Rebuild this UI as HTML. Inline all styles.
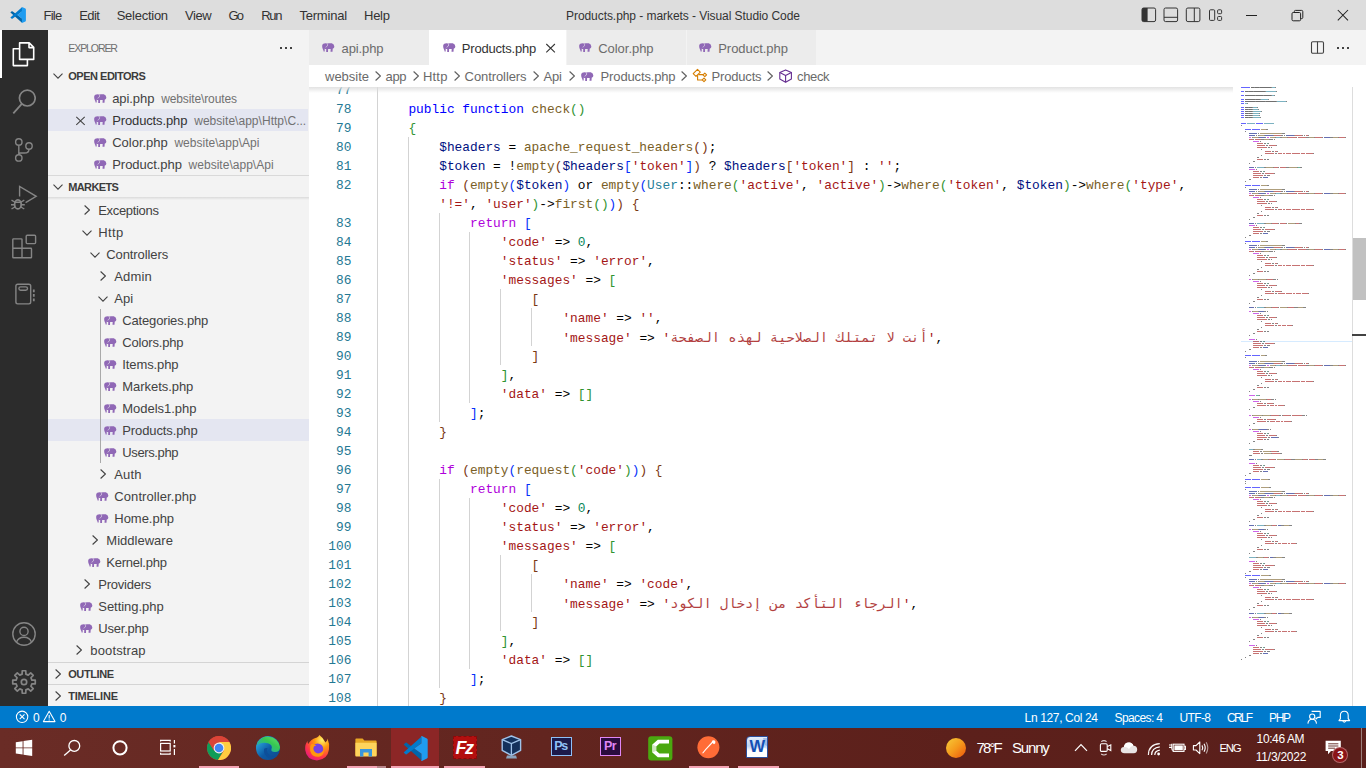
<!DOCTYPE html>
<html lang="en"><head><meta charset="utf-8"><title>Products.php - markets - Visual Studio Code</title>
<style>
html,body{margin:0;padding:0;}
body{width:1366px;height:768px;overflow:hidden;position:relative;background:#fff;font-family:"Liberation Sans",sans-serif;}
.b{position:absolute;display:block;}
.t{position:absolute;white-space:pre;display:block;}
.code{position:absolute;left:0;top:0;font-family:"Liberation Mono","DejaVu Sans Mono",monospace;font-size:12.83px;}
.ln{position:absolute;white-space:pre;height:19px;line-height:19px;color:#000;}
.num{position:absolute;white-space:pre;height:19px;line-height:19px;color:#237893;text-align:right;width:60px;}
.ar{font-family:"DejaVu Sans Mono",monospace;font-size:13.8px;opacity:.82;}
.k{color:#0000ff}.c{color:#af00db}.f{color:#795e26}.v{color:#001080}.s{color:#a31515}.n{color:#098658}.y{color:#267f99}
.b1{color:#0431fa}.b2{color:#319331}.b3{color:#7b3814}
</style></head><body>
<div class="b" style="left:0px;top:0px;width:1366px;height:30px;background:#dddddd;"></div>
<div class="b" style="left:0px;top:30px;width:48px;height:676px;background:#2c2c2c;"></div>
<div class="b" style="left:48px;top:30px;width:261px;height:676px;background:#f3f3f3;"></div>
<div class="b" style="left:309px;top:30px;width:1057px;height:35px;background:#f3f3f3;"></div>
<div class="b" style="left:309px;top:65px;width:1057px;height:22px;background:#ffffff;"></div>
<div class="b" style="left:0px;top:706px;width:1366px;height:22px;background:#007acc;"></div>
<div class="b" style="left:0px;top:728px;width:1366px;height:40px;background:linear-gradient(90deg,#6a2c26 0%,#62251f 40%,#5c201b 70%,#5a1f1b 100%);"></div>
<span class="t " style="left:43.50px;top:1px;height:30px;line-height:30px;font-size:13px;color:#333333;letter-spacing:-0.749px;">File</span>
<span class="t " style="left:79.20px;top:1px;height:30px;line-height:30px;font-size:13px;color:#333333;letter-spacing:-0.534px;">Edit</span>
<span class="t " style="left:116.70px;top:1px;height:30px;line-height:30px;font-size:13px;color:#333333;letter-spacing:-0.260px;">Selection</span>
<span class="t " style="left:184.90px;top:1px;height:30px;line-height:30px;font-size:13px;color:#333333;letter-spacing:-0.381px;">View</span>
<span class="t " style="left:228.50px;top:1px;height:30px;line-height:30px;font-size:13px;color:#333333;letter-spacing:-1.741px;">Go</span>
<span class="t " style="left:261.20px;top:1px;height:30px;line-height:30px;font-size:13px;color:#333333;letter-spacing:-1.223px;">Run</span>
<span class="t " style="left:299.40px;top:1px;height:30px;line-height:30px;font-size:13px;color:#333333;letter-spacing:-0.203px;">Terminal</span>
<span class="t " style="left:364.10px;top:1px;height:30px;line-height:30px;font-size:13px;color:#333333;letter-spacing:-0.312px;">Help</span>
<span class="t " style="left:566.00px;top:1px;height:30px;line-height:30px;font-size:12px;color:#333333;letter-spacing:-0.061px;">Products.php - markets - Visual Studio Code</span>
<div class="b" style="left:309px;top:30px;width:120px;height:35px;background:#ececec;"></div>
<div class="b" style="left:429px;top:30px;width:137px;height:35px;background:#ffffff;"></div>
<div class="b" style="left:567px;top:30px;width:119px;height:35px;background:#ececec;"></div>
<div class="b" style="left:687px;top:30px;width:129px;height:35px;background:#ececec;"></div>
<span class="t " style="left:341.60px;top:31px;height:35px;line-height:35px;font-size:13px;color:#6b6b6b;letter-spacing:-0.108px;">api.php</span>
<span class="t " style="left:461.80px;top:31px;height:35px;line-height:35px;font-size:13px;color:#333333;letter-spacing:-0.200px;">Products.php</span>
<span class="t " style="left:598.20px;top:31px;height:35px;line-height:35px;font-size:13px;color:#6b6b6b;letter-spacing:-0.031px;">Color.php</span>
<span class="t " style="left:718.20px;top:31px;height:35px;line-height:35px;font-size:13px;color:#6b6b6b;letter-spacing:-0.030px;">Product.php</span>
<span class="t " style="left:325.00px;top:66px;height:22px;line-height:22px;font-size:13px;color:#6a6a6a;letter-spacing:-0.013px;">website</span>
<span class="t " style="left:385.60px;top:66px;height:22px;line-height:22px;font-size:13px;color:#6a6a6a;letter-spacing:-0.344px;">app</span>
<span class="t " style="left:423.00px;top:66px;height:22px;line-height:22px;font-size:13px;color:#6a6a6a;letter-spacing:0.186px;">Http</span>
<span class="t " style="left:464.60px;top:66px;height:22px;line-height:22px;font-size:13px;color:#6a6a6a;letter-spacing:-0.085px;">Controllers</span>
<span class="t " style="left:543.60px;top:66px;height:22px;line-height:22px;font-size:13px;color:#6a6a6a;letter-spacing:-0.195px;">Api</span>
<span class="t " style="left:600.60px;top:66px;height:22px;line-height:22px;font-size:13px;color:#6a6a6a;letter-spacing:-0.145px;">Products.php</span>
<span class="t " style="left:711.60px;top:66px;height:22px;line-height:22px;font-size:13px;color:#6a6a6a;letter-spacing:-0.186px;">Products</span>
<span class="t " style="left:797.00px;top:66px;height:22px;line-height:22px;font-size:13px;color:#6a6a6a;letter-spacing:-0.340px;">check</span>
<span class="t " style="left:68.30px;top:31px;height:35px;line-height:35px;font-size:10.6px;color:#6f6f6f;letter-spacing:-1.147px;">EXPLORER</span>
<span class="t " style="left:68.30px;top:65px;height:22px;line-height:22px;font-size:11px;color:#3b3b3b;font-weight:700;letter-spacing:-0.493px;">OPEN EDITORS</span>
<div class="b" style="left:48px;top:109px;width:260px;height:22px;background:#e4e6f1;"></div>
<span class="t " style="left:112.20px;top:88px;height:22px;line-height:22px;font-size:13px;color:#424242;letter-spacing:-0.074px;">api.php</span>
<span class="t " style="left:161.20px;top:88px;height:22px;line-height:22px;font-size:12px;color:#717171;letter-spacing:-0.121px;">website\routes</span>
<span class="t " style="left:112.20px;top:110px;height:22px;line-height:22px;font-size:13px;color:#333;letter-spacing:-0.127px;">Products.php</span>
<span class="t " style="left:194.20px;top:110px;height:22px;line-height:22px;font-size:12px;color:#717171;letter-spacing:0.031px;">website\app\Http\C...</span>
<span class="t " style="left:112.20px;top:132px;height:22px;line-height:22px;font-size:13px;color:#424242;letter-spacing:-0.006px;">Color.php</span>
<span class="t " style="left:174.40px;top:132px;height:22px;line-height:22px;font-size:12px;color:#717171;letter-spacing:0.020px;">website\app\Api</span>
<span class="t " style="left:112.20px;top:154px;height:22px;line-height:22px;font-size:13px;color:#424242;letter-spacing:-0.030px;">Product.php</span>
<span class="t " style="left:188.60px;top:154px;height:22px;line-height:22px;font-size:12px;color:#717171;letter-spacing:0.020px;">website\app\Api</span>
<div class="b" style="left:48px;top:175px;width:261px;height:1px;background:#d9d9d9;"></div>
<span class="t " style="left:68.30px;top:176px;height:22px;line-height:22px;font-size:11px;color:#3b3b3b;font-weight:700;letter-spacing:-0.648px;">MARKETS</span>
<div class="b" style="left:48px;top:419px;width:261px;height:22px;background:#e4e6f1;"></div>
<span class="t " style="left:98.20px;top:200px;height:22px;line-height:22px;font-size:13px;color:#424242;letter-spacing:-0.321px;">Exceptions</span>
<span class="t " style="left:98.20px;top:222px;height:22px;line-height:22px;font-size:13px;color:#424242;letter-spacing:0.386px;">Http</span>
<span class="t " style="left:106.20px;top:244px;height:22px;line-height:22px;font-size:13px;color:#424242;letter-spacing:-0.085px;">Controllers</span>
<span class="t " style="left:114.20px;top:266px;height:22px;line-height:22px;font-size:13px;color:#424242;letter-spacing:0.163px;">Admin</span>
<span class="t " style="left:114.20px;top:288px;height:22px;line-height:22px;font-size:13px;color:#424242;letter-spacing:0.105px;">Api</span>
<span class="t " style="left:122.30px;top:310px;height:22px;line-height:22px;font-size:13px;color:#424242;letter-spacing:-0.166px;">Categories.php</span>
<span class="t " style="left:122.30px;top:332px;height:22px;line-height:22px;font-size:13px;color:#424242;letter-spacing:-0.174px;">Colors.php</span>
<span class="t " style="left:122.30px;top:354px;height:22px;line-height:22px;font-size:13px;color:#424242;letter-spacing:-0.110px;">Items.php</span>
<span class="t " style="left:122.30px;top:376px;height:22px;line-height:22px;font-size:13px;color:#424242;letter-spacing:-0.053px;">Markets.php</span>
<span class="t " style="left:122.30px;top:398px;height:22px;line-height:22px;font-size:13px;color:#424242;letter-spacing:-0.023px;">Models1.php</span>
<span class="t " style="left:122.30px;top:420px;height:22px;line-height:22px;font-size:13px;color:#424242;letter-spacing:-0.109px;">Products.php</span>
<span class="t " style="left:122.30px;top:442px;height:22px;line-height:22px;font-size:13px;color:#424242;letter-spacing:-0.381px;">Users.php</span>
<span class="t " style="left:114.20px;top:464px;height:22px;line-height:22px;font-size:13px;color:#424242;letter-spacing:0.220px;">Auth</span>
<span class="t " style="left:114.30px;top:486px;height:22px;line-height:22px;font-size:13px;color:#424242;letter-spacing:0.082px;">Controller.php</span>
<span class="t " style="left:114.30px;top:508px;height:22px;line-height:22px;font-size:13px;color:#424242;letter-spacing:-0.025px;">Home.php</span>
<span class="t " style="left:106.30px;top:530px;height:22px;line-height:22px;font-size:13px;color:#424242;letter-spacing:0.015px;">Middleware</span>
<span class="t " style="left:106.30px;top:552px;height:22px;line-height:22px;font-size:13px;color:#424242;letter-spacing:-0.253px;">Kernel.php</span>
<span class="t " style="left:98.30px;top:574px;height:22px;line-height:22px;font-size:13px;color:#424242;letter-spacing:-0.238px;">Providers</span>
<span class="t " style="left:98.30px;top:596px;height:22px;line-height:22px;font-size:13px;color:#424242;letter-spacing:-0.037px;">Setting.php</span>
<span class="t " style="left:98.30px;top:618px;height:22px;line-height:22px;font-size:13px;color:#424242;letter-spacing:-0.218px;">User.php</span>
<span class="t " style="left:90.30px;top:640px;height:22px;line-height:22px;font-size:13px;color:#424242;letter-spacing:0.138px;">bootstrap</span>
<div class="b" style="left:100px;top:309px;width:1px;height:154px;background:#a9a9a9;"></div>
<div class="b" style="left:48px;top:662px;width:261px;height:1px;background:#d4d4d4;"></div>
<span class="t " style="left:68.20px;top:663px;height:22px;line-height:22px;font-size:11px;color:#3b3b3b;font-weight:700;letter-spacing:-0.379px;">OUTLINE</span>
<div class="b" style="left:48px;top:684px;width:261px;height:1px;background:#d4d4d4;"></div>
<span class="t " style="left:68.20px;top:685px;height:22px;line-height:22px;font-size:11px;color:#3b3b3b;font-weight:700;letter-spacing:-0.219px;">TIMELINE</span>
<span class="t " style="left:33.00px;top:707px;height:22px;line-height:22px;font-size:12px;color:#ffffff;">0</span>
<span class="t " style="left:59.70px;top:707px;height:22px;line-height:22px;font-size:12px;color:#ffffff;">0</span>
<span class="t " style="left:1024.60px;top:707px;height:22px;line-height:22px;font-size:12px;color:#ffffff;letter-spacing:-0.358px;">Ln 127, Col 24</span>
<span class="t " style="left:1114.60px;top:707px;height:22px;line-height:22px;font-size:12px;color:#ffffff;letter-spacing:-0.621px;">Spaces: 4</span>
<span class="t " style="left:1179.60px;top:707px;height:22px;line-height:22px;font-size:12px;color:#ffffff;letter-spacing:-0.648px;">UTF-8</span>
<span class="t " style="left:1227.00px;top:707px;height:22px;line-height:22px;font-size:12px;color:#ffffff;letter-spacing:-1.778px;">CRLF</span>
<span class="t " style="left:1269.00px;top:707px;height:22px;line-height:22px;font-size:12px;color:#ffffff;letter-spacing:-1.338px;">PHP</span>
<span class="t " style="left:976.60px;top:728px;height:40px;line-height:40px;font-size:15px;color:#ffffff;letter-spacing:-1.947px;">78°F</span>
<span class="t " style="left:1012.00px;top:728px;height:40px;line-height:40px;font-size:15px;color:#ffffff;letter-spacing:-1.182px;">Sunny</span>
<span class="t " style="left:1219.60px;top:728px;height:40px;line-height:40px;font-size:11.4px;color:#ffffff;letter-spacing:-1.352px;">ENG</span>
<span class="t " style="left:1256.60px;top:730px;height:18px;line-height:18px;font-size:12px;color:#ffffff;letter-spacing:-0.385px;">10:46 AM</span>
<span class="t " style="left:1255.80px;top:748px;height:18px;line-height:18px;font-size:12px;color:#ffffff;letter-spacing:-0.236px;">11/3/2022</span>
<div class="code">
<div class="num" style="left:291.4px;top:81px">77</div>
<div class="ln" style="left:377.60px;top:81px"></div>
<div class="num" style="left:291.4px;top:100px">78</div>
<div class="ln" style="left:408.40px;top:100px"><span class="k">public</span> <span class="k">function</span> <span class="f">check</span><span class="b2">()</span></div>
<div class="num" style="left:291.4px;top:119px">79</div>
<div class="ln" style="left:408.40px;top:119px"><span class="b2">{</span></div>
<div class="num" style="left:291.4px;top:138px">80</div>
<div class="ln" style="left:439.20px;top:138px"><span class="v">$headers</span> = <span class="f">apache_request_headers</span><span class="b3">()</span>;</div>
<div class="num" style="left:291.4px;top:157px">81</div>
<div class="ln" style="left:439.20px;top:157px"><span class="v">$token</span> = !<span class="f">empty</span><span class="b3">(</span><span class="v">$headers</span><span class="b1">[</span><span class="s">'token'</span><span class="b1">]</span><span class="b3">)</span> ? <span class="v">$headers</span><span class="b3">[</span><span class="s">'token'</span><span class="b3">]</span> : <span class="s">''</span>;</div>
<div class="num" style="left:291.4px;top:176px">82</div>
<div class="ln" style="left:439.20px;top:176px"><span class="c">if</span> <span class="b3">(</span><span class="f">empty</span><span class="b1">(</span><span class="v">$token</span><span class="b1">)</span> or <span class="f">empty</span><span class="b1">(</span><span class="y">User</span>::<span class="f">where</span><span class="b2">(</span><span class="s">'active'</span>, <span class="s">'active'</span><span class="b2">)</span>-&gt;<span class="f">where</span><span class="b2">(</span><span class="s">'token'</span>, <span class="v">$token</span><span class="b2">)</span>-&gt;<span class="f">where</span><span class="b2">(</span><span class="s">'type'</span>,</div>
<div class="ln" style="left:439.20px;top:195px"><span class="s">'!='</span>, <span class="s">'user'</span><span class="b2">)</span>-&gt;<span class="f">first</span><span class="b2">()</span><span class="b1">)</span><span class="b3">)</span> <span class="b3">{</span></div>
<div class="num" style="left:291.4px;top:214px">83</div>
<div class="ln" style="left:470.00px;top:214px"><span class="c">return</span> <span class="b1">[</span></div>
<div class="num" style="left:291.4px;top:233px">84</div>
<div class="ln" style="left:500.80px;top:233px"><span class="s">'code'</span> =&gt; <span class="n">0</span>,</div>
<div class="num" style="left:291.4px;top:252px">85</div>
<div class="ln" style="left:500.80px;top:252px"><span class="s">'status'</span> =&gt; <span class="s">'error'</span>,</div>
<div class="num" style="left:291.4px;top:271px">86</div>
<div class="ln" style="left:500.80px;top:271px"><span class="s">'messages'</span> =&gt; <span class="b2">[</span></div>
<div class="num" style="left:291.4px;top:290px">87</div>
<div class="ln" style="left:531.60px;top:290px"><span class="b3">[</span></div>
<div class="num" style="left:291.4px;top:309px">88</div>
<div class="ln" style="left:562.40px;top:309px"><span class="s">'name'</span> =&gt; <span class="s">''</span>,</div>
<div class="num" style="left:291.4px;top:328px">89</div>
<div class="ln" style="left:562.40px;top:328px"><span class="s">'message'</span> =&gt; <span class="s">'<span class="ar">أنت لا تمتلك الصلاحية لهذه الصفحة</span>'</span>,</div>
<div class="num" style="left:291.4px;top:347px">90</div>
<div class="ln" style="left:531.60px;top:347px"><span class="b3">]</span></div>
<div class="num" style="left:291.4px;top:366px">91</div>
<div class="ln" style="left:500.80px;top:366px"><span class="b2">]</span>,</div>
<div class="num" style="left:291.4px;top:385px">92</div>
<div class="ln" style="left:500.80px;top:385px"><span class="s">'data'</span> =&gt; <span class="b2">[]</span></div>
<div class="num" style="left:291.4px;top:404px">93</div>
<div class="ln" style="left:470.00px;top:404px"><span class="b1">]</span>;</div>
<div class="num" style="left:291.4px;top:423px">94</div>
<div class="ln" style="left:439.20px;top:423px"><span class="b3">}</span></div>
<div class="num" style="left:291.4px;top:442px">95</div>
<div class="ln" style="left:377.60px;top:442px"></div>
<div class="num" style="left:291.4px;top:461px">96</div>
<div class="ln" style="left:439.20px;top:461px"><span class="c">if</span> <span class="b3">(</span><span class="f">empty</span><span class="b1">(</span><span class="f">request</span><span class="b2">(</span><span class="s">'code'</span><span class="b2">)</span><span class="b1">)</span><span class="b3">)</span> <span class="b3">{</span></div>
<div class="num" style="left:291.4px;top:480px">97</div>
<div class="ln" style="left:470.00px;top:480px"><span class="c">return</span> <span class="b1">[</span></div>
<div class="num" style="left:291.4px;top:499px">98</div>
<div class="ln" style="left:500.80px;top:499px"><span class="s">'code'</span> =&gt; <span class="n">0</span>,</div>
<div class="num" style="left:291.4px;top:518px">99</div>
<div class="ln" style="left:500.80px;top:518px"><span class="s">'status'</span> =&gt; <span class="s">'error'</span>,</div>
<div class="num" style="left:291.4px;top:537px">100</div>
<div class="ln" style="left:500.80px;top:537px"><span class="s">'messages'</span> =&gt; <span class="b2">[</span></div>
<div class="num" style="left:291.4px;top:556px">101</div>
<div class="ln" style="left:531.60px;top:556px"><span class="b3">[</span></div>
<div class="num" style="left:291.4px;top:575px">102</div>
<div class="ln" style="left:562.40px;top:575px"><span class="s">'name'</span> =&gt; <span class="s">'code'</span>,</div>
<div class="num" style="left:291.4px;top:594px">103</div>
<div class="ln" style="left:562.40px;top:594px"><span class="s">'message'</span> =&gt; <span class="s">'<span class="ar">الرجاء التأكد من إدخال الكود</span>'</span>,</div>
<div class="num" style="left:291.4px;top:613px">104</div>
<div class="ln" style="left:531.60px;top:613px"><span class="b3">]</span></div>
<div class="num" style="left:291.4px;top:632px">105</div>
<div class="ln" style="left:500.80px;top:632px"><span class="b2">]</span>,</div>
<div class="num" style="left:291.4px;top:651px">106</div>
<div class="ln" style="left:500.80px;top:651px"><span class="s">'data'</span> =&gt; <span class="b2">[]</span></div>
<div class="num" style="left:291.4px;top:670px">107</div>
<div class="ln" style="left:470.00px;top:670px"><span class="b1">]</span>;</div>
<div class="num" style="left:291.4px;top:689px">108</div>
<div class="ln" style="left:439.20px;top:689px"><span class="b3">}</span></div>
</div>
<div class="b" style="left:377px;top:80px;width:1px;height:646px;background:#d3d3d3;"></div>
<div class="b" style="left:408px;top:137px;width:1px;height:589px;background:#d3d3d3;"></div>
<div class="b" style="left:439px;top:213px;width:1px;height:209px;background:#d3d3d3;"></div>
<div class="b" style="left:469px;top:232px;width:1px;height:171px;background:#d3d3d3;"></div>
<div class="b" style="left:500px;top:289px;width:1px;height:76px;background:#d3d3d3;"></div>
<div class="b" style="left:531px;top:308px;width:1px;height:38px;background:#d3d3d3;"></div>
<div class="b" style="left:439px;top:479px;width:1px;height:209px;background:#d3d3d3;"></div>
<div class="b" style="left:469px;top:498px;width:1px;height:171px;background:#d3d3d3;"></div>
<div class="b" style="left:500px;top:555px;width:1px;height:76px;background:#d3d3d3;"></div>
<div class="b" style="left:531px;top:574px;width:1px;height:38px;background:#d3d3d3;"></div>
<div class="b" style="left:309px;top:65px;width:1057px;height:22px;background:#ffffff;"></div>
<div class="b" style="left:309px;top:87px;width:924px;height:6px;background:linear-gradient(#dddddd,rgba(255,255,255,0));opacity:.85"></div>
<span class="t " style="left:325.00px;top:66px;height:22px;line-height:22px;font-size:13px;color:#6a6a6a;letter-spacing:-0.013px;">website</span>
<span class="t " style="left:385.60px;top:66px;height:22px;line-height:22px;font-size:13px;color:#6a6a6a;letter-spacing:-0.344px;">app</span>
<span class="t " style="left:423.00px;top:66px;height:22px;line-height:22px;font-size:13px;color:#6a6a6a;letter-spacing:0.186px;">Http</span>
<span class="t " style="left:464.60px;top:66px;height:22px;line-height:22px;font-size:13px;color:#6a6a6a;letter-spacing:-0.085px;">Controllers</span>
<span class="t " style="left:543.60px;top:66px;height:22px;line-height:22px;font-size:13px;color:#6a6a6a;letter-spacing:-0.195px;">Api</span>
<span class="t " style="left:600.60px;top:66px;height:22px;line-height:22px;font-size:13px;color:#6a6a6a;letter-spacing:-0.145px;">Products.php</span>
<span class="t " style="left:711.60px;top:66px;height:22px;line-height:22px;font-size:13px;color:#6a6a6a;letter-spacing:-0.186px;">Products</span>
<span class="t " style="left:797.00px;top:66px;height:22px;line-height:22px;font-size:13px;color:#6a6a6a;letter-spacing:-0.340px;">check</span>
<div class="b" style="left:309px;top:706px;width:1057px;height:22px;background:#007acc;"></div>
<span class="t " style="left:1024.60px;top:707px;height:22px;line-height:22px;font-size:12px;color:#ffffff;letter-spacing:-0.358px;">Ln 127, Col 24</span>
<span class="t " style="left:1114.60px;top:707px;height:22px;line-height:22px;font-size:12px;color:#ffffff;letter-spacing:-0.621px;">Spaces: 4</span>
<span class="t " style="left:1179.60px;top:707px;height:22px;line-height:22px;font-size:12px;color:#ffffff;letter-spacing:-0.648px;">UTF-8</span>
<span class="t " style="left:1227.00px;top:707px;height:22px;line-height:22px;font-size:12px;color:#ffffff;letter-spacing:-1.778px;">CRLF</span>
<span class="t " style="left:1269.00px;top:707px;height:22px;line-height:22px;font-size:12px;color:#ffffff;letter-spacing:-1.338px;">PHP</span>
<div class="b" style="left:1352px;top:87px;width:1px;height:619px;background:#dddddd;"></div>
<div class="b" style="left:1353px;top:238px;width:13px;height:62px;background:#c1c1c1;"></div>
<div class="b" style="left:1352px;top:334px;width:14px;height:2px;background:#424242;"></div>
<div class="b" style="left:48px;top:197px;width:261px;height:3px;background:linear-gradient(rgba(0,0,0,0.10),rgba(0,0,0,0));"></div>
<svg class="b" style="left:10.4px;top:7.2px;" width="16" height="16" viewBox="0 0 16 16"><path fill="#0065a9" d="M0.4,5.6 L1.7,4.3 Q2,4.1 2.4,4.3 L12,11.6 L12,15.8 Z"/><path fill="#007acc" d="M0.4,10.4 L1.7,11.7 Q2,11.9 2.4,11.7 L12,4.4 L12,0.2 Z"/><path fill="#1f9cf0" d="M11.6,0.1 Q12,-0.1 12.5,0.2 L15.4,1.6 Q15.9,1.9 15.9,2.5 L15.9,13.5 Q15.9,14.1 15.4,14.4 L12.5,15.8 Q12,16.1 11.6,15.9 L11.9,15.6 L11.9,11.4 L7.3,8 L11.9,4.6 L11.9,0.4 Z"/></svg>
<svg class="b" style="left:1141px;top:7px;" width="16" height="16" viewBox="0 0 16 16"><rect x="1" y="1" width="13.6" height="13.6" rx="1.6" fill="none" stroke="#333333" stroke-width="1"/><path fill="#333333" d="M1,2.4 Q1,1 2.4,1 L6.6,1 L6.6,14.6 L2.4,14.6 Q1,14.6 1,13.2 Z"/></svg>
<svg class="b" style="left:1163px;top:7px;" width="16" height="16" viewBox="0 0 16 16"><rect x="1" y="1" width="13.6" height="13.6" rx="1.6" fill="none" stroke="#333333" stroke-width="1"/><path stroke="#333333" stroke-width="1" d="M1,10.3 H14.6"/></svg>
<svg class="b" style="left:1185px;top:7px;" width="16" height="16" viewBox="0 0 16 16"><rect x="1.3" y="1" width="13.6" height="13.6" rx="1.6" fill="none" stroke="#333333" stroke-width="1"/><path stroke="#333333" stroke-width="1" d="M9.3,1 V14.6"/></svg>
<svg class="b" style="left:1208px;top:7px;" width="16" height="16" viewBox="0 0 16 16"><rect x="1.5" y="2.8" width="5.2" height="10.6" rx="1" fill="none" stroke="#333333" stroke-width="1"/><rect x="9.6" y="2.8" width="4" height="3.9" rx="0.9" fill="none" stroke="#333333" stroke-width="1"/><rect x="9.6" y="9.5" width="4" height="3.9" rx="0.9" fill="none" stroke="#333333" stroke-width="1"/></svg>
<div class="b" style="left:1246px;top:15px;width:11px;height:1px;background:#222;"></div>
<svg class="b" style="left:1290px;top:9px;" width="15" height="14" viewBox="0 0 15 14"><rect x="2" y="3.5" width="8.6" height="8.3" rx="1.2" fill="none" stroke="#222" stroke-width="1"/><path fill="none" stroke="#222" stroke-width="1" d="M4.3,3.4 V2.6 Q4.3,1.4 5.5,1.4 H11.6 Q12.8,1.4 12.8,2.6 V8.4 Q12.8,9.6 11.6,9.6 H10.8"/></svg>
<svg class="b" style="left:1337px;top:9px;" width="12" height="12" viewBox="0 0 12 12"><path stroke="#222" stroke-width="1.05" d="M0.8,1 L11,11.3 M11,1 L0.8,11.3"/></svg>
<div class="b" style="left:0px;top:30px;width:2px;height:48px;background:#ffffff;"></div>
<svg class="b" style="left:12px;top:42px;" width="24" height="26" viewBox="0 0 24 26"><path fill="none" stroke="#fff" stroke-width="1.6" stroke-linejoin="round" d="M7.6,0.9 H17.2 L21.7,5.4 V17.4 H7.6 Z M17,0.9 V5.6 H21.7 M7.6,6.8 H1.3 V23.6 H15.4 V17.6"/></svg>
<svg class="b" style="left:12px;top:88px;" width="24" height="28" viewBox="0 0 24 28"><circle cx="15.3" cy="10.1" r="7.9" fill="none" stroke="#858585" stroke-width="1.7"/><path stroke="#858585" stroke-width="1.8" d="M9.8,15.9 L1.3,25.3"/></svg>
<svg class="b" style="left:12px;top:136px;" width="24" height="28" viewBox="0 0 24 28"><g fill="none" stroke="#858585" stroke-width="1.4"><circle cx="6.8" cy="5.9" r="3.2"/><circle cx="6.8" cy="21.9" r="3.2"/><circle cx="17" cy="10" r="3.2"/><path d="M6.8,9.1 V18.7 M17,13.2 Q17,17 12.5,17 H8.5 Q6.8,17 6.8,18.7"/></g></svg>
<svg class="b" style="left:10px;top:184px;" width="28" height="26" viewBox="0 0 28 26"><g fill="none" stroke="#858585" stroke-width="1.4"><path d="M9.6,12.4 V2.4 L26.2,12.3 L15.6,18.6"/><ellipse cx="7.9" cy="20.4" rx="3.3" ry="4.5" stroke-width="1.8"/><path d="M4.6,18.3 H11.2 M1.5,16.2 L4.7,18 M14.3,16.2 L11.1,18 M1,20.8 H4.5 M11.3,20.8 H14.8 M1.5,25 L4.9,23 M14.3,25 L10.9,23"/></g></svg>
<svg class="b" style="left:10px;top:232px;" width="28" height="28" viewBox="0 0 28 28"><g fill="none" stroke="#858585" stroke-width="1.4"><path d="M3,6.9 H11.4 Q12,6.9 12,7.5 V16.3 H20.9 Q21.5,16.3 21.5,16.9 V25.2 Q21.5,25.8 20.9,25.8 H3.4 Q2.8,25.8 2.8,25.2 V7.5 Q2.8,6.9 3.4,6.9 M2.8,16.3 H12 V25.8"/><rect x="16.2" y="3.2" width="9.4" height="8.4" rx="1"/></g></svg>
<svg class="b" style="left:12px;top:280px;" width="26" height="28" viewBox="0 0 26 28"><g fill="none" stroke="#858585" stroke-width="1.4"><rect x="3.9" y="4.2" width="14.8" height="19.7" rx="1.8"/><rect x="6.9" y="6.9" width="8.6" height="3.4" rx="1.7"/><path stroke-width="1.8" d="M21.8,9.6 V12.2 M21.8,14.1 V16.7 M21.8,18.6 V21.2"/></g></svg>
<svg class="b" style="left:10px;top:620px;" width="28" height="28" viewBox="0 0 28 28"><g fill="none" stroke="#858585" stroke-width="1.4"><circle cx="14" cy="14" r="11.2"/><circle cx="14" cy="11.4" r="4.1"/><path d="M6.5,22.3 Q8,17.2 14,17.2 Q20,17.2 21.5,22.3"/></g></svg>
<svg class="b" style="left:10px;top:668px;" width="28" height="28" viewBox="0 0 28 28"><g fill="none" stroke="#858585" stroke-width="1.7" stroke-linejoin="round"><path d="M12.22,2.74 L15.78,2.74 L15.89,6.12 L18.23,7.09 L20.70,4.78 L23.22,7.30 L20.91,9.77 L21.88,12.11 L25.26,12.22 L25.26,15.78 L21.88,15.89 L20.91,18.23 L23.22,20.70 L20.70,23.22 L18.23,20.91 L15.89,21.88 L15.78,25.26 L12.22,25.26 L12.11,21.88 L9.77,20.91 L7.30,23.22 L4.78,20.70 L7.09,18.23 L6.12,15.89 L2.74,15.78 L2.74,12.22 L6.12,12.11 L7.09,9.77 L4.78,7.30 L7.30,4.78 L9.77,7.09 L12.11,6.12 Z"/><circle cx="14" cy="14" r="2.7"/></g></svg>
<div class="b" style="left:280px;top:47px;width:2px;height:2px;background:#424242;"></div>
<div class="b" style="left:285px;top:47px;width:2px;height:2px;background:#424242;"></div>
<div class="b" style="left:290px;top:47px;width:2px;height:2px;background:#424242;"></div>
<svg class="b" style="left:53px;top:73.2px;" width="10" height="6" viewBox="0 0 10 6"><path fill="none" stroke="#424242" stroke-width="1.1" d="M0.5,0.6 L5,5.2 L9.5,0.6"/></svg>
<svg class="b" style="left:53px;top:184.2px;" width="10" height="6" viewBox="0 0 10 6"><path fill="none" stroke="#424242" stroke-width="1.1" d="M0.5,0.6 L5,5.2 L9.5,0.6"/></svg>
<svg class="b" style="left:55.4px;top:669px;" width="6" height="10" viewBox="0 0 6 10"><path fill="none" stroke="#424242" stroke-width="1.1" d="M0.6,0.5 L5.4,5 L0.6,9.5"/></svg>
<svg class="b" style="left:55.4px;top:691.1px;" width="6" height="10" viewBox="0 0 6 10"><path fill="none" stroke="#424242" stroke-width="1.1" d="M0.6,0.5 L5.4,5 L0.6,9.5"/></svg>
<svg class="b" style="left:93.8px;top:93.7px;" width="13" height="10" viewBox="0 0 13 10"><path fill="#9068b6" d="M1.3,0.7 Q3,-0.2 5,0.5 Q6.2,0 7.6,0.2 L9.8,0.3 Q12.5,1.4 12.3,3.9 Q12.1,5.2 10.7,5.7 L10.5,8.7 L8.5,8.7 L8.7,6.1 L6.1,6.1 L6,9 L4.2,9 L4.2,6.1 Q3.1,5.9 2.7,5.4 L2.7,8.5 L1.6,8.5 Q1.5,7 0.9,6.2 Q0,4.5 0.2,2.6 Q0.3,1.3 1.3,0.7 Z"/><path fill="none" stroke="#f3f3f3" stroke-width="0.55" d="M5.7,0.6 Q6.1,3.6 3.6,4.3"/></svg>
<svg class="b" style="left:93.8px;top:115.7px;" width="13" height="10" viewBox="0 0 13 10"><path fill="#9068b6" d="M1.3,0.7 Q3,-0.2 5,0.5 Q6.2,0 7.6,0.2 L9.8,0.3 Q12.5,1.4 12.3,3.9 Q12.1,5.2 10.7,5.7 L10.5,8.7 L8.5,8.7 L8.7,6.1 L6.1,6.1 L6,9 L4.2,9 L4.2,6.1 Q3.1,5.9 2.7,5.4 L2.7,8.5 L1.6,8.5 Q1.5,7 0.9,6.2 Q0,4.5 0.2,2.6 Q0.3,1.3 1.3,0.7 Z"/><path fill="none" stroke="#e4e6f1" stroke-width="0.55" d="M5.7,0.6 Q6.1,3.6 3.6,4.3"/></svg>
<svg class="b" style="left:93.8px;top:137.7px;" width="13" height="10" viewBox="0 0 13 10"><path fill="#9068b6" d="M1.3,0.7 Q3,-0.2 5,0.5 Q6.2,0 7.6,0.2 L9.8,0.3 Q12.5,1.4 12.3,3.9 Q12.1,5.2 10.7,5.7 L10.5,8.7 L8.5,8.7 L8.7,6.1 L6.1,6.1 L6,9 L4.2,9 L4.2,6.1 Q3.1,5.9 2.7,5.4 L2.7,8.5 L1.6,8.5 Q1.5,7 0.9,6.2 Q0,4.5 0.2,2.6 Q0.3,1.3 1.3,0.7 Z"/><path fill="none" stroke="#f3f3f3" stroke-width="0.55" d="M5.7,0.6 Q6.1,3.6 3.6,4.3"/></svg>
<svg class="b" style="left:93.8px;top:159.7px;" width="13" height="10" viewBox="0 0 13 10"><path fill="#9068b6" d="M1.3,0.7 Q3,-0.2 5,0.5 Q6.2,0 7.6,0.2 L9.8,0.3 Q12.5,1.4 12.3,3.9 Q12.1,5.2 10.7,5.7 L10.5,8.7 L8.5,8.7 L8.7,6.1 L6.1,6.1 L6,9 L4.2,9 L4.2,6.1 Q3.1,5.9 2.7,5.4 L2.7,8.5 L1.6,8.5 Q1.5,7 0.9,6.2 Q0,4.5 0.2,2.6 Q0.3,1.3 1.3,0.7 Z"/><path fill="none" stroke="#f3f3f3" stroke-width="0.55" d="M5.7,0.6 Q6.1,3.6 3.6,4.3"/></svg>
<svg class="b" style="left:74.6px;top:114.6px;" width="12" height="12" viewBox="0 0 12 12"><path stroke="#424242" stroke-width="1.05" d="M1.3,1.8 L9.7,9.8 M9.7,1.8 L1.3,9.8"/></svg>
<svg class="b" style="left:84.1px;top:205.0px;" width="6" height="10" viewBox="0 0 6 10"><path fill="none" stroke="#424242" stroke-width="1.1" d="M0.6,0.5 L5.4,5 L0.6,9.5"/></svg>
<svg class="b" style="left:82.0px;top:229.5px;" width="10" height="6" viewBox="0 0 10 6"><path fill="none" stroke="#424242" stroke-width="1.1" d="M0.5,0.6 L5,5.2 L9.5,0.6"/></svg>
<svg class="b" style="left:90.0px;top:251.5px;" width="10" height="6" viewBox="0 0 10 6"><path fill="none" stroke="#424242" stroke-width="1.1" d="M0.5,0.6 L5,5.2 L9.5,0.6"/></svg>
<svg class="b" style="left:100.1px;top:271.0px;" width="6" height="10" viewBox="0 0 6 10"><path fill="none" stroke="#424242" stroke-width="1.1" d="M0.6,0.5 L5.4,5 L0.6,9.5"/></svg>
<svg class="b" style="left:98.0px;top:295.5px;" width="10" height="6" viewBox="0 0 10 6"><path fill="none" stroke="#424242" stroke-width="1.1" d="M0.5,0.6 L5,5.2 L9.5,0.6"/></svg>
<svg class="b" style="left:103.6px;top:315.7px;" width="13" height="10" viewBox="0 0 13 10"><path fill="#9068b6" d="M1.3,0.7 Q3,-0.2 5,0.5 Q6.2,0 7.6,0.2 L9.8,0.3 Q12.5,1.4 12.3,3.9 Q12.1,5.2 10.7,5.7 L10.5,8.7 L8.5,8.7 L8.7,6.1 L6.1,6.1 L6,9 L4.2,9 L4.2,6.1 Q3.1,5.9 2.7,5.4 L2.7,8.5 L1.6,8.5 Q1.5,7 0.9,6.2 Q0,4.5 0.2,2.6 Q0.3,1.3 1.3,0.7 Z"/><path fill="none" stroke="#f3f3f3" stroke-width="0.55" d="M5.7,0.6 Q6.1,3.6 3.6,4.3"/></svg>
<svg class="b" style="left:103.6px;top:337.7px;" width="13" height="10" viewBox="0 0 13 10"><path fill="#9068b6" d="M1.3,0.7 Q3,-0.2 5,0.5 Q6.2,0 7.6,0.2 L9.8,0.3 Q12.5,1.4 12.3,3.9 Q12.1,5.2 10.7,5.7 L10.5,8.7 L8.5,8.7 L8.7,6.1 L6.1,6.1 L6,9 L4.2,9 L4.2,6.1 Q3.1,5.9 2.7,5.4 L2.7,8.5 L1.6,8.5 Q1.5,7 0.9,6.2 Q0,4.5 0.2,2.6 Q0.3,1.3 1.3,0.7 Z"/><path fill="none" stroke="#f3f3f3" stroke-width="0.55" d="M5.7,0.6 Q6.1,3.6 3.6,4.3"/></svg>
<svg class="b" style="left:103.6px;top:359.7px;" width="13" height="10" viewBox="0 0 13 10"><path fill="#9068b6" d="M1.3,0.7 Q3,-0.2 5,0.5 Q6.2,0 7.6,0.2 L9.8,0.3 Q12.5,1.4 12.3,3.9 Q12.1,5.2 10.7,5.7 L10.5,8.7 L8.5,8.7 L8.7,6.1 L6.1,6.1 L6,9 L4.2,9 L4.2,6.1 Q3.1,5.9 2.7,5.4 L2.7,8.5 L1.6,8.5 Q1.5,7 0.9,6.2 Q0,4.5 0.2,2.6 Q0.3,1.3 1.3,0.7 Z"/><path fill="none" stroke="#f3f3f3" stroke-width="0.55" d="M5.7,0.6 Q6.1,3.6 3.6,4.3"/></svg>
<svg class="b" style="left:103.6px;top:381.7px;" width="13" height="10" viewBox="0 0 13 10"><path fill="#9068b6" d="M1.3,0.7 Q3,-0.2 5,0.5 Q6.2,0 7.6,0.2 L9.8,0.3 Q12.5,1.4 12.3,3.9 Q12.1,5.2 10.7,5.7 L10.5,8.7 L8.5,8.7 L8.7,6.1 L6.1,6.1 L6,9 L4.2,9 L4.2,6.1 Q3.1,5.9 2.7,5.4 L2.7,8.5 L1.6,8.5 Q1.5,7 0.9,6.2 Q0,4.5 0.2,2.6 Q0.3,1.3 1.3,0.7 Z"/><path fill="none" stroke="#f3f3f3" stroke-width="0.55" d="M5.7,0.6 Q6.1,3.6 3.6,4.3"/></svg>
<svg class="b" style="left:103.6px;top:403.7px;" width="13" height="10" viewBox="0 0 13 10"><path fill="#9068b6" d="M1.3,0.7 Q3,-0.2 5,0.5 Q6.2,0 7.6,0.2 L9.8,0.3 Q12.5,1.4 12.3,3.9 Q12.1,5.2 10.7,5.7 L10.5,8.7 L8.5,8.7 L8.7,6.1 L6.1,6.1 L6,9 L4.2,9 L4.2,6.1 Q3.1,5.9 2.7,5.4 L2.7,8.5 L1.6,8.5 Q1.5,7 0.9,6.2 Q0,4.5 0.2,2.6 Q0.3,1.3 1.3,0.7 Z"/><path fill="none" stroke="#f3f3f3" stroke-width="0.55" d="M5.7,0.6 Q6.1,3.6 3.6,4.3"/></svg>
<svg class="b" style="left:103.6px;top:425.7px;" width="13" height="10" viewBox="0 0 13 10"><path fill="#9068b6" d="M1.3,0.7 Q3,-0.2 5,0.5 Q6.2,0 7.6,0.2 L9.8,0.3 Q12.5,1.4 12.3,3.9 Q12.1,5.2 10.7,5.7 L10.5,8.7 L8.5,8.7 L8.7,6.1 L6.1,6.1 L6,9 L4.2,9 L4.2,6.1 Q3.1,5.9 2.7,5.4 L2.7,8.5 L1.6,8.5 Q1.5,7 0.9,6.2 Q0,4.5 0.2,2.6 Q0.3,1.3 1.3,0.7 Z"/><path fill="none" stroke="#e4e6f1" stroke-width="0.55" d="M5.7,0.6 Q6.1,3.6 3.6,4.3"/></svg>
<svg class="b" style="left:103.6px;top:447.7px;" width="13" height="10" viewBox="0 0 13 10"><path fill="#9068b6" d="M1.3,0.7 Q3,-0.2 5,0.5 Q6.2,0 7.6,0.2 L9.8,0.3 Q12.5,1.4 12.3,3.9 Q12.1,5.2 10.7,5.7 L10.5,8.7 L8.5,8.7 L8.7,6.1 L6.1,6.1 L6,9 L4.2,9 L4.2,6.1 Q3.1,5.9 2.7,5.4 L2.7,8.5 L1.6,8.5 Q1.5,7 0.9,6.2 Q0,4.5 0.2,2.6 Q0.3,1.3 1.3,0.7 Z"/><path fill="none" stroke="#f3f3f3" stroke-width="0.55" d="M5.7,0.6 Q6.1,3.6 3.6,4.3"/></svg>
<svg class="b" style="left:100.1px;top:469.0px;" width="6" height="10" viewBox="0 0 6 10"><path fill="none" stroke="#424242" stroke-width="1.1" d="M0.6,0.5 L5.4,5 L0.6,9.5"/></svg>
<svg class="b" style="left:95.6px;top:491.7px;" width="13" height="10" viewBox="0 0 13 10"><path fill="#9068b6" d="M1.3,0.7 Q3,-0.2 5,0.5 Q6.2,0 7.6,0.2 L9.8,0.3 Q12.5,1.4 12.3,3.9 Q12.1,5.2 10.7,5.7 L10.5,8.7 L8.5,8.7 L8.7,6.1 L6.1,6.1 L6,9 L4.2,9 L4.2,6.1 Q3.1,5.9 2.7,5.4 L2.7,8.5 L1.6,8.5 Q1.5,7 0.9,6.2 Q0,4.5 0.2,2.6 Q0.3,1.3 1.3,0.7 Z"/><path fill="none" stroke="#f3f3f3" stroke-width="0.55" d="M5.7,0.6 Q6.1,3.6 3.6,4.3"/></svg>
<svg class="b" style="left:95.6px;top:513.7px;" width="13" height="10" viewBox="0 0 13 10"><path fill="#9068b6" d="M1.3,0.7 Q3,-0.2 5,0.5 Q6.2,0 7.6,0.2 L9.8,0.3 Q12.5,1.4 12.3,3.9 Q12.1,5.2 10.7,5.7 L10.5,8.7 L8.5,8.7 L8.7,6.1 L6.1,6.1 L6,9 L4.2,9 L4.2,6.1 Q3.1,5.9 2.7,5.4 L2.7,8.5 L1.6,8.5 Q1.5,7 0.9,6.2 Q0,4.5 0.2,2.6 Q0.3,1.3 1.3,0.7 Z"/><path fill="none" stroke="#f3f3f3" stroke-width="0.55" d="M5.7,0.6 Q6.1,3.6 3.6,4.3"/></svg>
<svg class="b" style="left:92.2px;top:535.0px;" width="6" height="10" viewBox="0 0 6 10"><path fill="none" stroke="#424242" stroke-width="1.1" d="M0.6,0.5 L5.4,5 L0.6,9.5"/></svg>
<svg class="b" style="left:87.6px;top:557.7px;" width="13" height="10" viewBox="0 0 13 10"><path fill="#9068b6" d="M1.3,0.7 Q3,-0.2 5,0.5 Q6.2,0 7.6,0.2 L9.8,0.3 Q12.5,1.4 12.3,3.9 Q12.1,5.2 10.7,5.7 L10.5,8.7 L8.5,8.7 L8.7,6.1 L6.1,6.1 L6,9 L4.2,9 L4.2,6.1 Q3.1,5.9 2.7,5.4 L2.7,8.5 L1.6,8.5 Q1.5,7 0.9,6.2 Q0,4.5 0.2,2.6 Q0.3,1.3 1.3,0.7 Z"/><path fill="none" stroke="#f3f3f3" stroke-width="0.55" d="M5.7,0.6 Q6.1,3.6 3.6,4.3"/></svg>
<svg class="b" style="left:84.2px;top:579.0px;" width="6" height="10" viewBox="0 0 6 10"><path fill="none" stroke="#424242" stroke-width="1.1" d="M0.6,0.5 L5.4,5 L0.6,9.5"/></svg>
<svg class="b" style="left:79.6px;top:601.7px;" width="13" height="10" viewBox="0 0 13 10"><path fill="#9068b6" d="M1.3,0.7 Q3,-0.2 5,0.5 Q6.2,0 7.6,0.2 L9.8,0.3 Q12.5,1.4 12.3,3.9 Q12.1,5.2 10.7,5.7 L10.5,8.7 L8.5,8.7 L8.7,6.1 L6.1,6.1 L6,9 L4.2,9 L4.2,6.1 Q3.1,5.9 2.7,5.4 L2.7,8.5 L1.6,8.5 Q1.5,7 0.9,6.2 Q0,4.5 0.2,2.6 Q0.3,1.3 1.3,0.7 Z"/><path fill="none" stroke="#f3f3f3" stroke-width="0.55" d="M5.7,0.6 Q6.1,3.6 3.6,4.3"/></svg>
<svg class="b" style="left:79.6px;top:623.7px;" width="13" height="10" viewBox="0 0 13 10"><path fill="#9068b6" d="M1.3,0.7 Q3,-0.2 5,0.5 Q6.2,0 7.6,0.2 L9.8,0.3 Q12.5,1.4 12.3,3.9 Q12.1,5.2 10.7,5.7 L10.5,8.7 L8.5,8.7 L8.7,6.1 L6.1,6.1 L6,9 L4.2,9 L4.2,6.1 Q3.1,5.9 2.7,5.4 L2.7,8.5 L1.6,8.5 Q1.5,7 0.9,6.2 Q0,4.5 0.2,2.6 Q0.3,1.3 1.3,0.7 Z"/><path fill="none" stroke="#f3f3f3" stroke-width="0.55" d="M5.7,0.6 Q6.1,3.6 3.6,4.3"/></svg>
<svg class="b" style="left:76.2px;top:645.0px;" width="6" height="10" viewBox="0 0 6 10"><path fill="none" stroke="#424242" stroke-width="1.1" d="M0.6,0.5 L5.4,5 L0.6,9.5"/></svg>
<svg class="b" style="left:322.4px;top:42.9px;" width="13" height="10" viewBox="0 0 13 10"><path fill="#9068b6" d="M1.3,0.7 Q3,-0.2 5,0.5 Q6.2,0 7.6,0.2 L9.8,0.3 Q12.5,1.4 12.3,3.9 Q12.1,5.2 10.7,5.7 L10.5,8.7 L8.5,8.7 L8.7,6.1 L6.1,6.1 L6,9 L4.2,9 L4.2,6.1 Q3.1,5.9 2.7,5.4 L2.7,8.5 L1.6,8.5 Q1.5,7 0.9,6.2 Q0,4.5 0.2,2.6 Q0.3,1.3 1.3,0.7 Z"/><path fill="none" stroke="#ececec" stroke-width="0.55" d="M5.7,0.6 Q6.1,3.6 3.6,4.3"/></svg>
<svg class="b" style="left:442.8px;top:42.9px;" width="13" height="10" viewBox="0 0 13 10"><path fill="#9068b6" d="M1.3,0.7 Q3,-0.2 5,0.5 Q6.2,0 7.6,0.2 L9.8,0.3 Q12.5,1.4 12.3,3.9 Q12.1,5.2 10.7,5.7 L10.5,8.7 L8.5,8.7 L8.7,6.1 L6.1,6.1 L6,9 L4.2,9 L4.2,6.1 Q3.1,5.9 2.7,5.4 L2.7,8.5 L1.6,8.5 Q1.5,7 0.9,6.2 Q0,4.5 0.2,2.6 Q0.3,1.3 1.3,0.7 Z"/><path fill="none" stroke="#ffffff" stroke-width="0.55" d="M5.7,0.6 Q6.1,3.6 3.6,4.3"/></svg>
<svg class="b" style="left:579.4px;top:42.9px;" width="13" height="10" viewBox="0 0 13 10"><path fill="#9068b6" d="M1.3,0.7 Q3,-0.2 5,0.5 Q6.2,0 7.6,0.2 L9.8,0.3 Q12.5,1.4 12.3,3.9 Q12.1,5.2 10.7,5.7 L10.5,8.7 L8.5,8.7 L8.7,6.1 L6.1,6.1 L6,9 L4.2,9 L4.2,6.1 Q3.1,5.9 2.7,5.4 L2.7,8.5 L1.6,8.5 Q1.5,7 0.9,6.2 Q0,4.5 0.2,2.6 Q0.3,1.3 1.3,0.7 Z"/><path fill="none" stroke="#ececec" stroke-width="0.55" d="M5.7,0.6 Q6.1,3.6 3.6,4.3"/></svg>
<svg class="b" style="left:699.4px;top:42.9px;" width="13" height="10" viewBox="0 0 13 10"><path fill="#9068b6" d="M1.3,0.7 Q3,-0.2 5,0.5 Q6.2,0 7.6,0.2 L9.8,0.3 Q12.5,1.4 12.3,3.9 Q12.1,5.2 10.7,5.7 L10.5,8.7 L8.5,8.7 L8.7,6.1 L6.1,6.1 L6,9 L4.2,9 L4.2,6.1 Q3.1,5.9 2.7,5.4 L2.7,8.5 L1.6,8.5 Q1.5,7 0.9,6.2 Q0,4.5 0.2,2.6 Q0.3,1.3 1.3,0.7 Z"/><path fill="none" stroke="#ececec" stroke-width="0.55" d="M5.7,0.6 Q6.1,3.6 3.6,4.3"/></svg>
<svg class="b" style="left:545px;top:43px;" width="11" height="11" viewBox="0 0 11 11"><path stroke="#333" stroke-width="1.05" d="M1.3,1 L9.9,9.3 M9.9,1 L1.3,9.3"/></svg>
<svg class="b" style="left:1310px;top:40px;" width="16" height="16" viewBox="0 0 16 16"><rect x="1.5" y="1.7" width="12" height="11.6" rx="1.2" fill="none" stroke="#424242" stroke-width="1.1"/><path stroke="#424242" stroke-width="1.1" d="M7.5,1.7 V13.3"/></svg>
<div class="b" style="left:1337px;top:47px;width:2.2px;height:2px;background:#424242;"></div>
<div class="b" style="left:1342px;top:47px;width:2.2px;height:2px;background:#424242;"></div>
<div class="b" style="left:1347px;top:47px;width:2.2px;height:2px;background:#424242;"></div>
<svg class="b" style="left:374.9px;top:70.7px;" width="6" height="10" viewBox="0 0 6 10"><path fill="none" stroke="#616161" stroke-width="1.15" d="M0.6,0.5 L5.4,5 L0.6,9.5"/></svg>
<svg class="b" style="left:413.1px;top:70.7px;" width="6" height="10" viewBox="0 0 6 10"><path fill="none" stroke="#616161" stroke-width="1.15" d="M0.6,0.5 L5.4,5 L0.6,9.5"/></svg>
<svg class="b" style="left:454.1px;top:70.7px;" width="6" height="10" viewBox="0 0 6 10"><path fill="none" stroke="#616161" stroke-width="1.15" d="M0.6,0.5 L5.4,5 L0.6,9.5"/></svg>
<svg class="b" style="left:533.0px;top:70.7px;" width="6" height="10" viewBox="0 0 6 10"><path fill="none" stroke="#616161" stroke-width="1.15" d="M0.6,0.5 L5.4,5 L0.6,9.5"/></svg>
<svg class="b" style="left:568.8px;top:70.7px;" width="6" height="10" viewBox="0 0 6 10"><path fill="none" stroke="#616161" stroke-width="1.15" d="M0.6,0.5 L5.4,5 L0.6,9.5"/></svg>
<svg class="b" style="left:681.4px;top:70.7px;" width="6" height="10" viewBox="0 0 6 10"><path fill="none" stroke="#616161" stroke-width="1.15" d="M0.6,0.5 L5.4,5 L0.6,9.5"/></svg>
<svg class="b" style="left:767.1px;top:70.7px;" width="6" height="10" viewBox="0 0 6 10"><path fill="none" stroke="#616161" stroke-width="1.15" d="M0.6,0.5 L5.4,5 L0.6,9.5"/></svg>
<svg class="b" style="left:581px;top:71.9px;" width="13" height="10" viewBox="0 0 13 10"><path fill="#9068b6" d="M1.3,0.7 Q3,-0.2 5,0.5 Q6.2,0 7.6,0.2 L9.8,0.3 Q12.5,1.4 12.3,3.9 Q12.1,5.2 10.7,5.7 L10.5,8.7 L8.5,8.7 L8.7,6.1 L6.1,6.1 L6,9 L4.2,9 L4.2,6.1 Q3.1,5.9 2.7,5.4 L2.7,8.5 L1.6,8.5 Q1.5,7 0.9,6.2 Q0,4.5 0.2,2.6 Q0.3,1.3 1.3,0.7 Z"/><path fill="none" stroke="#ffffff" stroke-width="0.55" d="M5.7,0.6 Q6.1,3.6 3.6,4.3"/></svg>
<svg class="b" style="left:692px;top:68px;" width="17" height="16" viewBox="0 0 17 16"><g fill="none" stroke="#d67e00" stroke-width="1.1" stroke-linejoin="round"><path d="M1.2,5.7 L5.5,1.4 L8.3,4.1 L4,8.4 Z"/><path d="M6.4,6.6 H11 M5.6,7.2 V12 H10.2"/><path d="M11,6.9 L12.8,5.1 L14.6,6.9 L12.8,8.7 Z M10.2,11.9 L12,10.1 L13.8,11.9 L12,13.7 Z"/></g></svg>
<svg class="b" style="left:778px;top:68px;" width="16" height="16" viewBox="0 0 16 16"><g fill="none" stroke="#652d90" stroke-width="1.1" stroke-linejoin="round"><path d="M7.6,1.9 L13.4,4.6 V10.9 L7.6,14.2 L1.8,10.9 V4.6 Z"/><path d="M1.8,4.6 L7.6,7.6 L13.4,4.6 M7.6,7.6 V14.2"/></g></svg>
<svg class="b" style="left:15px;top:710px;" width="14" height="14" viewBox="0 0 14 14"><g fill="none" stroke="#fff" stroke-width="1.05"><circle cx="7.1" cy="6.8" r="5.7"/><path d="M4.7,4.4 L9.5,9.2 M9.5,4.4 L4.7,9.2"/></g></svg>
<svg class="b" style="left:42px;top:710px;" width="14" height="13" viewBox="0 0 14 13"><g fill="none" stroke="#fff" stroke-width="1.05" stroke-linejoin="round"><path d="M7.2,1.2 L13,11.6 H1.4 Z"/><path d="M7.2,5 V8.6 M7.2,9.5 V10.6"/></g></svg>
<svg class="b" style="left:1306px;top:709px;" width="16" height="16" viewBox="0 0 16 16"><g fill="none" stroke="#fff" stroke-width="1.1"><circle cx="6.2" cy="7.6" r="2.6"/><path d="M1.9,14.6 Q2.3,10.3 6.2,10.3 Q10.1,10.3 10.5,14.6"/><path stroke-linejoin="round" d="M5.6,2.4 H14.2 V8.4 H11.8 L10,10 V8.4"/></g></svg>
<svg class="b" style="left:1337px;top:709px;" width="15" height="16" viewBox="0 0 15 16"><g fill="none" stroke="#fff" stroke-width="1.1" stroke-linejoin="round"><path d="M2,11.6 L3.4,9.6 V6.4 Q3.4,2.2 7.3,2.2 Q11.2,2.2 11.2,6.4 V9.6 L12.6,11.6 Z"/><path d="M5.8,12 Q7.3,14.2 8.8,12"/></g></svg>
<div class="b" style="left:391px;top:728px;width:48px;height:40px;background:#8c2626;"></div>
<div class="b" style="left:199px;top:766px;width:40px;height:2px;background:#f3a3b3;"></div>
<div class="b" style="left:346.5px;top:766px;width:30.5px;height:2px;background:#f3a3b3;"></div>
<div class="b" style="left:391px;top:766px;width:48px;height:2px;background:#f3a3b3;"></div>
<div class="b" style="left:444px;top:766px;width:40.5px;height:2px;background:#f3a3b3;"></div>
<div class="b" style="left:688.5px;top:766px;width:40.5px;height:2px;background:#f3a3b3;"></div>
<div class="b" style="left:737.5px;top:766px;width:41.0px;height:2px;background:#f3a3b3;"></div>
<div class="b" style="left:377px;top:766px;width:8.5px;height:2px;background:#b8858a;"></div>
<div class="b" style="left:1361px;top:728px;width:1px;height:40px;background:#9a7d7a;"></div>
<svg class="b" style="left:15px;top:739px;" width="18" height="18" viewBox="0 0 18 18"><g fill="#fff"><path d="M0.8,3.2 L7.6,2.2 V8.4 H0.8 Z"/><path d="M8.5,2.05 L17.2,0.8 V8.4 H8.5 Z"/><path d="M0.8,9.3 H7.6 V15.6 L0.8,14.6 Z"/><path d="M8.5,9.3 H17.2 V17 L8.5,15.75 Z"/></g></svg>
<svg class="b" style="left:62px;top:738px;" width="22" height="20" viewBox="0 0 22 20"><g fill="none" stroke="#fff" stroke-width="1.3"><circle cx="12.3" cy="7.9" r="5.4"/><path d="M8.5,11.9 L2.2,17.6"/></g></svg>
<svg class="b" style="left:110px;top:738px;" width="20" height="20" viewBox="0 0 20 20"><circle cx="10" cy="9.8" r="6.6" fill="none" stroke="#fff" stroke-width="2"/></svg>
<svg class="b" style="left:158px;top:738px;" width="20" height="20" viewBox="0 0 20 20"><g fill="none" stroke="#fff" stroke-width="1.2"><rect x="2.6" y="5.4" width="9.6" height="7.6"/><path d="M2.6,3.6 V2.4 H12.2 V3.6 M2.6,14.8 V16.2 H12.2 V14.8"/><path d="M16.4,2 V5.6 M16.4,11 V17"/><rect x="15.4" y="7" width="2" height="2.4" fill="#fff" stroke="none"/></g></svg>
<svg class="b" style="left:207px;top:735.8px;" width="24" height="24" viewBox="0 0 24 24"><circle cx="12" cy="12" r="12" fill="#db4437"/><path fill="#0f9d58" d="M1.6,6 A12,12 0 0 0 11,24 L16.5,14.5 L7,14.5 Z"/><path fill="#ffcd40" d="M11,24 A12,12 0 0 0 22.4,6 L12,6 L17,14.6 Z"/><path fill="#db4437" d="M1.6,6 A12,12 0 0 1 22.4,6 L12,6 L7,14.5 Z"/><circle cx="12" cy="12" r="5.4" fill="#f1f1f1"/><circle cx="12" cy="12" r="4.3" fill="#4285f4"/></svg>
<svg class="b" style="left:256px;top:735.8px;" width="24" height="24" viewBox="0 0 24 24"><defs><linearGradient id="eg" x1="0" y1="0" x2="1" y2="1"><stop offset="0" stop-color="#35c1f1"/><stop offset="0.55" stop-color="#0c59a4"/><stop offset="1" stop-color="#114a8b"/></linearGradient><linearGradient id="eg2" x1="0" y1="1" x2="1" y2="0"><stop offset="0" stop-color="#1b9de2"/><stop offset="0.6" stop-color="#36c752"/><stop offset="1" stop-color="#6be06b"/></linearGradient></defs><circle cx="12" cy="12" r="12" fill="url(#eg)"/><path fill="url(#eg2)" d="M0.4,10 A12,12 0 0 1 24,11 Q24,16 19,16 Q14.5,16 15.5,13 Q17,9 12,7.2 Q5,5.5 0.4,10 Z"/><path fill="#0d4f99" d="M8,13 Q7,19 13.5,22.5 Q18,23.5 21.5,19.5 Q16,21.5 12.5,18 Q10.2,15.5 11.5,12 Q9.5,11.5 8,13 Z"/></svg>
<svg class="b" style="left:304px;top:735px;" width="26" height="26" viewBox="0 0 26 26"><defs><radialGradient id="fg" cx="0.7" cy="0.2" r="0.9"><stop offset="0" stop-color="#fff36b"/><stop offset="0.35" stop-color="#ff980e"/><stop offset="0.75" stop-color="#ff3647"/><stop offset="1" stop-color="#e31587"/></radialGradient></defs><path fill="url(#fg)" d="M13,2.4 Q15,1.2 15.4,0 Q19.5,3 21.5,7.5 Q23.8,5.6 23.4,3.6 Q26,9 25,14.5 Q23.5,24.8 13,25.4 Q2.5,25 1.2,15 Q0.6,9.5 3.6,6 Q3.4,8 4.2,9 Q6.5,4.2 13,2.4 Z"/><circle cx="13.6" cy="14" r="5.6" fill="#7542e5"/><path fill="#ff980e" d="M7,9.2 Q10.5,8.4 12.2,10.6 Q9.6,10.8 9.4,13 Q9.2,17.5 14,18.4 Q18.4,18.4 19.6,14.6 Q20.8,20.5 15,21.8 Q8,22.4 6.2,16 Q5.4,12 7,9.2 Z"/></svg>
<svg class="b" style="left:355px;top:738px;" width="22" height="19" viewBox="0 0 22 19"><path fill="#e9a824" d="M0.4,1.2 Q0.4,0.4 1.2,0.4 H7.6 L9.4,2.4 H20.8 Q21.6,2.4 21.6,3.2 V17.6 H0.4 Z"/><path fill="#ffd45c" d="M0.4,4.8 H21.6 V17.8 Q21.6,18.4 21,18.4 H1 Q0.4,18.4 0.4,17.8 Z"/><path fill="#3a96dd" d="M5,11 H17 V18.4 H13.6 V14.4 H8.4 V18.4 H5 Z"/></svg>
<svg class="b" style="left:402.6px;top:735.6px;" width="25" height="25" viewBox="0 0 25 25"><path fill="#0065a9" d="M0.6,8.6 L2.6,6.7 Q3.1,6.3 3.7,6.7 L18.6,18 L18.6,24.4 Z"/><path fill="#007acc" d="M0.6,16.4 L2.6,18.3 Q3.1,18.7 3.7,18.3 L18.6,7 L18.6,0.6 Z"/><path fill="#1f9cf0" d="M18,0.3 Q18.7,-0.1 19.4,0.3 L23.9,2.5 Q24.7,2.9 24.7,3.8 L24.7,21.2 Q24.7,22.1 23.9,22.5 L19.4,24.7 Q18.7,25.1 18,24.7 L18.5,24.2 L18.5,17.8 L11.3,12.5 L18.5,7.2 L18.5,0.8 Z"/></svg>
<div class="b" style="left:452.5px;top:736.3px;width:24px;height:23.2px;background:#b30f0f;border:1px dashed #8a0a0a;box-sizing:border-box;"></div>
<span class="t " style="left:455.50px;top:736.5px;height:23px;line-height:23px;font-size:18px;color:#ffffff;font-weight:700;font-style:italic;letter-spacing:-1.5px;">Fz</span>
<svg class="b" style="left:501px;top:735px;" width="21" height="25" viewBox="0 0 21 25"><path fill="#14315c" stroke="#9fc3ea" stroke-width="1.4" stroke-linejoin="round" d="M10.4,1 L19.6,4.6 V15.4 L10.4,20.4 L1.2,15.4 V4.6 Z"/><path fill="none" stroke="#9fc3ea" stroke-width="1.3" d="M1.2,4.6 L10.4,8.6 L19.6,4.6 M10.4,8.6 V20.4"/><path fill="#8aa3bd" d="M6,20.6 H15 L16,23.4 H5 Z"/></svg>
<div class="b" style="left:550.7px;top:736.8px;width:21.5px;height:19.4px;background:#1c1a4a;border:1.3px solid #8fc0f7;box-sizing:border-box;"></div>
<span class="t " style="left:554.20px;top:737px;height:19px;line-height:19px;font-size:12.5px;color:#8fc0f7;font-weight:700;letter-spacing:-1.289px;">Ps</span>
<div class="b" style="left:599.7px;top:736.8px;width:21.5px;height:19.4px;background:#2a0c3e;border:1.3px solid #df86f5;box-sizing:border-box;"></div>
<span class="t " style="left:604.00px;top:737px;height:19px;line-height:19px;font-size:12.5px;color:#df86f5;font-weight:700;letter-spacing:-0.603px;">Pr</span>
<svg class="b" style="left:648px;top:735.6px;" width="25" height="25" viewBox="0 0 25 25"><rect x="0.2" y="0.2" width="24.2" height="24.2" rx="3" fill="#4aa80f"/><path fill="#ffffff" d="M9.8,3.8 H21 V7.6 H11.4 L8.2,10.4 V14.8 L11.4,17.6 H21 V21.2 H9.8 L4.4,16.6 V8.4 Z"/><path fill="#cfe8bd" d="M4.4,8.4 L8.2,10.4 V14.8 L4.4,16.6 Z"/></svg>
<svg class="b" style="left:697px;top:736px;" width="23" height="23" viewBox="0 0 23 23"><circle cx="11.4" cy="11.3" r="11" fill="#ff6c37"/><path fill="#fff" d="M15.4,4.4 Q17.6,3.6 18.4,5.4 Q18.8,7.4 17,8.2 L15.6,7 L9.4,13.6 L6,17.6 L5.2,17 L8.6,12.8 L14.6,6.2 Z"/></svg>
<div class="b" style="left:746px;top:736px;width:22px;height:22px;box-sizing:border-box;border:1px solid #2b4f9c;border-radius:4px 0 0 0;background:linear-gradient(180deg,#e4eefb 0%,#bcd3f3 45%,#ffffff 70%,#ffffff 100%);"></div>
<svg class="b" style="left:746px;top:736px;" width="22" height="22" viewBox="0 0 22 22"><path fill="#ffffff" d="M1,17 L16,11 L21,13 V21 H1 Z" opacity="0.9"/><path fill="#7f9fd8" d="M17,2 L21,2 L21,10 L19,9 Z" opacity="0.6"/></svg>
<span class="t " style="left:749.40px;top:736px;height:20px;line-height:20px;font-size:16.5px;color:#1450b4;font-weight:700;">W</span>
<div class="b" style="left:946px;top:737.8px;width:20.2px;height:20.2px;border-radius:50%;background:linear-gradient(135deg,#f6c233 10%,#f59a1c 50%,#ee5f0e 92%);"></div>
<svg class="b" style="left:1074px;top:743px;" width="14" height="9" viewBox="0 0 14 9"><path fill="none" stroke="#fff" stroke-width="1.2" d="M1,7.8 L7,1.6 L13,7.8"/></svg>
<svg class="b" style="left:1098px;top:739px;" width="15" height="18" viewBox="0 0 15 18"><g fill="none" stroke="#fff" stroke-width="1.1"><rect x="2.4" y="4.8" width="6.8" height="7.6" rx="1.2"/><path d="M9.4,7.6 L12.8,5.8 V11.6 L9.4,9.8"/><path d="M3.2,2.6 Q6,0.6 8.6,2.6 M3.2,15 Q6,17 8.6,15" opacity="0.8"/></g></svg>
<svg class="b" style="left:1120px;top:741px;" width="18" height="13" viewBox="0 0 18 13"><path fill="#e8e4e4" d="M4.6,12.2 Q0.6,12.2 0.8,8.8 Q1,6.2 3.8,6 Q4.8,1.4 9.2,1.6 Q12.4,1.8 13.4,4.8 Q17.2,4.8 17.2,8.6 Q17.2,12.2 13.6,12.2 Z"/><path fill="#fff" d="M3.8,6 Q4.8,1.4 9.2,1.6 Q12.4,1.8 13.4,4.8 Q10.5,5.2 9,8 Q7,5.4 3.8,6 Z"/></svg>
<svg class="b" style="left:1146px;top:741px;" width="16" height="16" viewBox="0 0 16 16"><g fill="none" stroke="#fff" stroke-width="1.2"><path d="M2.4,14 Q2.4,3.4 13.8,2.6" opacity="0.95"/><path d="M5.6,14 Q5.6,6.8 13.8,5.8"/><path d="M8.8,14 Q8.8,10 13.8,9.2"/></g><circle cx="12.6" cy="13" r="1.4" fill="#fff"/></svg>
<svg class="b" style="left:1168px;top:741px;" width="18" height="13" viewBox="0 0 18 13"><g fill="none" stroke="#fff" stroke-width="1.1"><rect x="5.2" y="3.2" width="10.8" height="7.2"/><path d="M16.2,5.2 H17.4 V8.4 H16.2"/><path d="M1,4 H3.8 M1,6.4 H3.8 M3.8,2.8 V7.6 Q3.8,9.4 5.2,9.4" /></g><rect x="6.4" y="4.4" width="8.4" height="4.8" fill="#fff"/></svg>
<svg class="b" style="left:1192px;top:740px;" width="18" height="16" viewBox="0 0 18 16"><g fill="none" stroke="#fff" stroke-width="1.1" stroke-linejoin="round"><path d="M1.4,5.6 H4 L7.8,2 V13.6 L4,10 H1.4 Z"/><path d="M10,5.4 Q11.4,7.8 10,10.2 M12,3.8 Q14.4,7.8 12,11.8"/><path d="M14.2,2.2 Q17.4,7.8 14.2,13.4" opacity="0.55"/></g></svg>
<svg class="b" style="left:1325px;top:740px;" width="17" height="15" viewBox="0 0 17 15"><path fill="#fff" d="M0.6,0.8 H15.8 V11 H6 L3,14.2 V11 H0.6 Z"/><path stroke="#5c201b" stroke-width="0.9" d="M3.2,3.8 H13.4 M3.2,6 H13.4 M3.2,8.2 H10"/></svg>
<div class="b" style="left:1332.4px;top:747.4px;width:16px;height:16px;border-radius:50%;background:#8b1418;border:1px solid rgba(255,255,255,0.35);box-sizing:border-box;"></div>
<span class="t " style="left:1337.20px;top:747.4px;height:16px;line-height:16px;font-size:11.5px;color:#ffffff;font-weight:700;">3</span>
<svg class="b" style="left:1240px;top:87px;" width="112" height="619" viewBox="0 0 112 619"><rect x="1" y="254" width="111" height="1" fill="#d6ebff"/><g opacity="0.6" shape-rendering="crispEdges" stroke-dasharray="none"><rect x="1" y="0" width="9" height="1" fill="#0000ff"/><rect x="11" y="0" width="3" height="1" fill="#111111"/><rect x="14" y="0" width="1" height="1" fill="#333333"/><rect x="15" y="0" width="4" height="1" fill="#111111"/><rect x="19" y="0" width="1" height="1" fill="#333333"/><rect x="20" y="0" width="11" height="1" fill="#111111"/><rect x="31" y="0" width="1" height="1" fill="#333333"/><rect x="32" y="0" width="3" height="1" fill="#267f99"/><rect x="35" y="0" width="1" height="1" fill="#333333"/><rect x="1" y="4" width="3" height="1" fill="#0000ff"/><rect x="5" y="4" width="3" height="1" fill="#111111"/><rect x="8" y="4" width="1" height="1" fill="#333333"/><rect x="9" y="4" width="4" height="1" fill="#111111"/><rect x="13" y="4" width="1" height="1" fill="#333333"/><rect x="14" y="4" width="11" height="1" fill="#111111"/><rect x="25" y="4" width="1" height="1" fill="#333333"/><rect x="26" y="4" width="10" height="1" fill="#267f99"/><rect x="36" y="4" width="1" height="1" fill="#333333"/><rect x="1" y="8" width="3" height="1" fill="#0000ff"/><rect x="5" y="8" width="10" height="1" fill="#111111"/><rect x="15" y="8" width="1" height="1" fill="#333333"/><rect x="16" y="8" width="7" height="1" fill="#111111"/><rect x="23" y="8" width="1" height="1" fill="#333333"/><rect x="24" y="8" width="7" height="1" fill="#111111"/><rect x="31" y="8" width="1" height="1" fill="#333333"/><rect x="32" y="8" width="2" height="1" fill="#267f99"/><rect x="34" y="8" width="1" height="1" fill="#333333"/><rect x="1" y="12" width="3" height="1" fill="#0000ff"/><rect x="5" y="12" width="10" height="1" fill="#111111"/><rect x="15" y="12" width="1" height="1" fill="#333333"/><rect x="16" y="12" width="4" height="1" fill="#111111"/><rect x="20" y="12" width="1" height="1" fill="#333333"/><rect x="21" y="12" width="7" height="1" fill="#267f99"/><rect x="28" y="12" width="1" height="1" fill="#333333"/><rect x="1" y="14" width="3" height="1" fill="#0000ff"/><rect x="5" y="14" width="10" height="1" fill="#111111"/><rect x="15" y="14" width="1" height="1" fill="#333333"/><rect x="16" y="14" width="9" height="1" fill="#111111"/><rect x="25" y="14" width="1" height="1" fill="#333333"/><rect x="26" y="14" width="10" height="1" fill="#111111"/><rect x="36" y="14" width="1" height="1" fill="#333333"/><rect x="37" y="14" width="9" height="1" fill="#267f99"/><rect x="46" y="14" width="1" height="1" fill="#333333"/><rect x="1" y="16" width="3" height="1" fill="#0000ff"/><rect x="5" y="16" width="2" height="1" fill="#267f99"/><rect x="7" y="16" width="1" height="1" fill="#333333"/><rect x="1" y="20" width="3" height="1" fill="#0000ff"/><rect x="5" y="20" width="3" height="1" fill="#111111"/><rect x="8" y="20" width="1" height="1" fill="#333333"/><rect x="9" y="20" width="3" height="1" fill="#111111"/><rect x="12" y="20" width="1" height="1" fill="#333333"/><rect x="13" y="20" width="4" height="1" fill="#267f99"/><rect x="17" y="20" width="1" height="1" fill="#333333"/><rect x="1" y="22" width="3" height="1" fill="#0000ff"/><rect x="5" y="22" width="3" height="1" fill="#111111"/><rect x="8" y="22" width="1" height="1" fill="#333333"/><rect x="9" y="22" width="3" height="1" fill="#111111"/><rect x="12" y="22" width="1" height="1" fill="#333333"/><rect x="13" y="22" width="5" height="1" fill="#267f99"/><rect x="18" y="22" width="1" height="1" fill="#333333"/><rect x="1" y="24" width="3" height="1" fill="#0000ff"/><rect x="5" y="24" width="3" height="1" fill="#111111"/><rect x="8" y="24" width="1" height="1" fill="#333333"/><rect x="9" y="24" width="3" height="1" fill="#111111"/><rect x="12" y="24" width="1" height="1" fill="#333333"/><rect x="13" y="24" width="8" height="1" fill="#267f99"/><rect x="21" y="24" width="1" height="1" fill="#333333"/><rect x="1" y="26" width="3" height="1" fill="#0000ff"/><rect x="5" y="26" width="3" height="1" fill="#111111"/><rect x="8" y="26" width="1" height="1" fill="#333333"/><rect x="9" y="26" width="3" height="1" fill="#111111"/><rect x="12" y="26" width="1" height="1" fill="#333333"/><rect x="13" y="26" width="6" height="1" fill="#267f99"/><rect x="19" y="26" width="1" height="1" fill="#333333"/><rect x="1" y="28" width="3" height="1" fill="#0000ff"/><rect x="5" y="28" width="3" height="1" fill="#111111"/><rect x="8" y="28" width="1" height="1" fill="#333333"/><rect x="9" y="28" width="3" height="1" fill="#111111"/><rect x="12" y="28" width="1" height="1" fill="#333333"/><rect x="13" y="28" width="6" height="1" fill="#267f99"/><rect x="19" y="28" width="1" height="1" fill="#333333"/><rect x="1" y="30" width="3" height="1" fill="#0000ff"/><rect x="5" y="30" width="3" height="1" fill="#111111"/><rect x="8" y="30" width="1" height="1" fill="#333333"/><rect x="9" y="30" width="3" height="1" fill="#111111"/><rect x="12" y="30" width="1" height="1" fill="#333333"/><rect x="13" y="30" width="7" height="1" fill="#267f99"/><rect x="20" y="30" width="1" height="1" fill="#333333"/><rect x="1" y="36" width="5" height="1" fill="#0000ff"/><rect x="7" y="36" width="8" height="1" fill="#267f99"/><rect x="16" y="36" width="7" height="1" fill="#0000ff"/><rect x="24" y="36" width="10" height="1" fill="#267f99"/><rect x="1" y="38" width="1" height="1" fill="#333333"/><rect x="5" y="42" width="6" height="1" fill="#0000ff"/><rect x="12" y="42" width="8" height="1" fill="#0000ff"/><rect x="21" y="42" width="5" height="1" fill="#795e26"/><rect x="26" y="42" width="1" height="1" fill="#333333"/><rect x="27" y="42" width="1" height="1" fill="#333333"/><rect x="5" y="44" width="1" height="1" fill="#333333"/><rect x="9" y="46" width="8" height="1" fill="#001080"/><rect x="18" y="46" width="1" height="1" fill="#333333"/><rect x="20" y="46" width="22" height="1" fill="#795e26"/><rect x="42" y="46" width="1" height="1" fill="#333333"/><rect x="43" y="46" width="1" height="1" fill="#333333"/><rect x="44" y="46" width="1" height="1" fill="#333333"/><rect x="9" y="48" width="6" height="1" fill="#001080"/><rect x="16" y="48" width="1" height="1" fill="#333333"/><rect x="18" y="48" width="1" height="1" fill="#333333"/><rect x="19" y="48" width="5" height="1" fill="#795e26"/><rect x="24" y="48" width="1" height="1" fill="#333333"/><rect x="25" y="48" width="8" height="1" fill="#001080"/><rect x="33" y="48" width="1" height="1" fill="#333333"/><rect x="34" y="48" width="7" height="1" fill="#a31515"/><rect x="41" y="48" width="1" height="1" fill="#333333"/><rect x="42" y="48" width="1" height="1" fill="#333333"/><rect x="44" y="48" width="1" height="1" fill="#333333"/><rect x="46" y="48" width="8" height="1" fill="#001080"/><rect x="54" y="48" width="1" height="1" fill="#333333"/><rect x="55" y="48" width="7" height="1" fill="#a31515"/><rect x="62" y="48" width="1" height="1" fill="#333333"/><rect x="64" y="48" width="1" height="1" fill="#333333"/><rect x="66" y="48" width="2" height="1" fill="#a31515"/><rect x="68" y="48" width="1" height="1" fill="#333333"/><rect x="9" y="50" width="2" height="1" fill="#af00db"/><rect x="12" y="50" width="1" height="1" fill="#333333"/><rect x="13" y="50" width="5" height="1" fill="#795e26"/><rect x="18" y="50" width="1" height="1" fill="#333333"/><rect x="19" y="50" width="6" height="1" fill="#001080"/><rect x="25" y="50" width="1" height="1" fill="#333333"/><rect x="27" y="50" width="2" height="1" fill="#af00db"/><rect x="30" y="50" width="5" height="1" fill="#795e26"/><rect x="35" y="50" width="1" height="1" fill="#333333"/><rect x="36" y="50" width="4" height="1" fill="#267f99"/><rect x="40" y="50" width="1" height="1" fill="#333333"/><rect x="41" y="50" width="1" height="1" fill="#333333"/><rect x="42" y="50" width="5" height="1" fill="#795e26"/><rect x="47" y="50" width="1" height="1" fill="#333333"/><rect x="48" y="50" width="8" height="1" fill="#a31515"/><rect x="56" y="50" width="1" height="1" fill="#333333"/><rect x="58" y="50" width="8" height="1" fill="#a31515"/><rect x="66" y="50" width="1" height="1" fill="#333333"/><rect x="67" y="50" width="1" height="1" fill="#333333"/><rect x="68" y="50" width="1" height="1" fill="#333333"/><rect x="69" y="50" width="5" height="1" fill="#795e26"/><rect x="74" y="50" width="1" height="1" fill="#333333"/><rect x="75" y="50" width="7" height="1" fill="#a31515"/><rect x="82" y="50" width="1" height="1" fill="#333333"/><rect x="84" y="50" width="6" height="1" fill="#001080"/><rect x="90" y="50" width="1" height="1" fill="#333333"/><rect x="91" y="50" width="1" height="1" fill="#333333"/><rect x="92" y="50" width="1" height="1" fill="#333333"/><rect x="93" y="50" width="5" height="1" fill="#795e26"/><rect x="98" y="50" width="1" height="1" fill="#333333"/><rect x="99" y="50" width="6" height="1" fill="#a31515"/><rect x="105" y="50" width="1" height="1" fill="#333333"/><rect x="9" y="52" width="4" height="1" fill="#a31515"/><rect x="13" y="52" width="1" height="1" fill="#333333"/><rect x="15" y="52" width="6" height="1" fill="#a31515"/><rect x="21" y="52" width="1" height="1" fill="#333333"/><rect x="22" y="52" width="1" height="1" fill="#333333"/><rect x="23" y="52" width="1" height="1" fill="#333333"/><rect x="24" y="52" width="5" height="1" fill="#795e26"/><rect x="29" y="52" width="1" height="1" fill="#333333"/><rect x="30" y="52" width="1" height="1" fill="#333333"/><rect x="31" y="52" width="1" height="1" fill="#333333"/><rect x="32" y="52" width="1" height="1" fill="#333333"/><rect x="34" y="52" width="1" height="1" fill="#333333"/><rect x="13" y="54" width="6" height="1" fill="#af00db"/><rect x="20" y="54" width="1" height="1" fill="#333333"/><rect x="17" y="56" width="6" height="1" fill="#a31515"/><rect x="24" y="56" width="1" height="1" fill="#333333"/><rect x="25" y="56" width="1" height="1" fill="#333333"/><rect x="27" y="56" width="1" height="1" fill="#098658"/><rect x="28" y="56" width="1" height="1" fill="#333333"/><rect x="17" y="58" width="8" height="1" fill="#a31515"/><rect x="26" y="58" width="1" height="1" fill="#333333"/><rect x="27" y="58" width="1" height="1" fill="#333333"/><rect x="29" y="58" width="7" height="1" fill="#a31515"/><rect x="36" y="58" width="1" height="1" fill="#333333"/><rect x="17" y="60" width="10" height="1" fill="#a31515"/><rect x="28" y="60" width="1" height="1" fill="#333333"/><rect x="29" y="60" width="1" height="1" fill="#333333"/><rect x="31" y="60" width="1" height="1" fill="#333333"/><rect x="21" y="62" width="1" height="1" fill="#333333"/><rect x="25" y="64" width="6" height="1" fill="#a31515"/><rect x="32" y="64" width="1" height="1" fill="#333333"/><rect x="33" y="64" width="1" height="1" fill="#333333"/><rect x="35" y="64" width="2" height="1" fill="#a31515"/><rect x="37" y="64" width="1" height="1" fill="#333333"/><rect x="25" y="66" width="9" height="1" fill="#a31515"/><rect x="35" y="66" width="1" height="1" fill="#333333"/><rect x="36" y="66" width="1" height="1" fill="#333333"/><rect x="38" y="66" width="4" height="1" fill="#a31515"/><rect x="43" y="66" width="2" height="1" fill="#a31515"/><rect x="46" y="66" width="5" height="1" fill="#a31515"/><rect x="52" y="66" width="8" height="1" fill="#a31515"/><rect x="61" y="66" width="4" height="1" fill="#a31515"/><rect x="66" y="66" width="7" height="1" fill="#a31515"/><rect x="73" y="66" width="1" height="1" fill="#333333"/><rect x="21" y="68" width="1" height="1" fill="#333333"/><rect x="17" y="70" width="1" height="1" fill="#333333"/><rect x="18" y="70" width="1" height="1" fill="#333333"/><rect x="17" y="72" width="6" height="1" fill="#a31515"/><rect x="24" y="72" width="1" height="1" fill="#333333"/><rect x="25" y="72" width="1" height="1" fill="#333333"/><rect x="27" y="72" width="1" height="1" fill="#333333"/><rect x="28" y="72" width="1" height="1" fill="#333333"/><rect x="13" y="74" width="1" height="1" fill="#333333"/><rect x="14" y="74" width="1" height="1" fill="#333333"/><rect x="9" y="76" width="1" height="1" fill="#333333"/><rect x="9" y="80" width="5" height="1" fill="#001080"/><rect x="15" y="80" width="1" height="1" fill="#333333"/><rect x="17" y="80" width="7" height="1" fill="#267f99"/><rect x="24" y="80" width="1" height="1" fill="#333333"/><rect x="25" y="80" width="1" height="1" fill="#333333"/><rect x="26" y="80" width="7" height="1" fill="#795e26"/><rect x="33" y="80" width="1" height="1" fill="#333333"/><rect x="34" y="80" width="4" height="1" fill="#a31515"/><rect x="38" y="80" width="1" height="1" fill="#333333"/><rect x="40" y="80" width="6" height="1" fill="#a31515"/><rect x="46" y="80" width="1" height="1" fill="#333333"/><rect x="47" y="80" width="1" height="1" fill="#333333"/><rect x="48" y="80" width="1" height="1" fill="#333333"/><rect x="49" y="80" width="8" height="1" fill="#795e26"/><rect x="57" y="80" width="1" height="1" fill="#333333"/><rect x="58" y="80" width="2" height="1" fill="#098658"/><rect x="60" y="80" width="1" height="1" fill="#333333"/><rect x="61" y="80" width="1" height="1" fill="#333333"/><rect x="9" y="82" width="6" height="1" fill="#af00db"/><rect x="16" y="82" width="1" height="1" fill="#333333"/><rect x="13" y="84" width="6" height="1" fill="#a31515"/><rect x="20" y="84" width="1" height="1" fill="#333333"/><rect x="21" y="84" width="1" height="1" fill="#333333"/><rect x="23" y="84" width="1" height="1" fill="#098658"/><rect x="24" y="84" width="1" height="1" fill="#333333"/><rect x="13" y="86" width="8" height="1" fill="#a31515"/><rect x="22" y="86" width="1" height="1" fill="#333333"/><rect x="23" y="86" width="1" height="1" fill="#333333"/><rect x="25" y="86" width="9" height="1" fill="#a31515"/><rect x="34" y="86" width="1" height="1" fill="#333333"/><rect x="13" y="88" width="10" height="1" fill="#a31515"/><rect x="24" y="88" width="1" height="1" fill="#333333"/><rect x="25" y="88" width="1" height="1" fill="#333333"/><rect x="27" y="88" width="1" height="1" fill="#333333"/><rect x="28" y="88" width="1" height="1" fill="#333333"/><rect x="29" y="88" width="1" height="1" fill="#333333"/><rect x="13" y="90" width="6" height="1" fill="#a31515"/><rect x="20" y="90" width="1" height="1" fill="#333333"/><rect x="21" y="90" width="1" height="1" fill="#333333"/><rect x="23" y="90" width="5" height="1" fill="#001080"/><rect x="9" y="92" width="1" height="1" fill="#333333"/><rect x="10" y="92" width="1" height="1" fill="#333333"/><rect x="5" y="94" width="1" height="1" fill="#333333"/><rect x="5" y="98" width="6" height="1" fill="#0000ff"/><rect x="12" y="98" width="8" height="1" fill="#0000ff"/><rect x="21" y="98" width="6" height="1" fill="#795e26"/><rect x="27" y="98" width="1" height="1" fill="#333333"/><rect x="28" y="98" width="1" height="1" fill="#333333"/><rect x="5" y="100" width="1" height="1" fill="#333333"/><rect x="9" y="102" width="8" height="1" fill="#001080"/><rect x="18" y="102" width="1" height="1" fill="#333333"/><rect x="20" y="102" width="22" height="1" fill="#795e26"/><rect x="42" y="102" width="1" height="1" fill="#333333"/><rect x="43" y="102" width="1" height="1" fill="#333333"/><rect x="44" y="102" width="1" height="1" fill="#333333"/><rect x="9" y="104" width="6" height="1" fill="#001080"/><rect x="16" y="104" width="1" height="1" fill="#333333"/><rect x="18" y="104" width="1" height="1" fill="#333333"/><rect x="19" y="104" width="5" height="1" fill="#795e26"/><rect x="24" y="104" width="1" height="1" fill="#333333"/><rect x="25" y="104" width="8" height="1" fill="#001080"/><rect x="33" y="104" width="1" height="1" fill="#333333"/><rect x="34" y="104" width="7" height="1" fill="#a31515"/><rect x="41" y="104" width="1" height="1" fill="#333333"/><rect x="42" y="104" width="1" height="1" fill="#333333"/><rect x="44" y="104" width="1" height="1" fill="#333333"/><rect x="46" y="104" width="8" height="1" fill="#001080"/><rect x="54" y="104" width="1" height="1" fill="#333333"/><rect x="55" y="104" width="7" height="1" fill="#a31515"/><rect x="62" y="104" width="1" height="1" fill="#333333"/><rect x="64" y="104" width="1" height="1" fill="#333333"/><rect x="66" y="104" width="2" height="1" fill="#a31515"/><rect x="68" y="104" width="1" height="1" fill="#333333"/><rect x="9" y="106" width="2" height="1" fill="#af00db"/><rect x="12" y="106" width="1" height="1" fill="#333333"/><rect x="13" y="106" width="5" height="1" fill="#795e26"/><rect x="18" y="106" width="1" height="1" fill="#333333"/><rect x="19" y="106" width="6" height="1" fill="#001080"/><rect x="25" y="106" width="1" height="1" fill="#333333"/><rect x="27" y="106" width="2" height="1" fill="#af00db"/><rect x="30" y="106" width="5" height="1" fill="#795e26"/><rect x="35" y="106" width="1" height="1" fill="#333333"/><rect x="36" y="106" width="4" height="1" fill="#267f99"/><rect x="40" y="106" width="1" height="1" fill="#333333"/><rect x="41" y="106" width="1" height="1" fill="#333333"/><rect x="42" y="106" width="5" height="1" fill="#795e26"/><rect x="47" y="106" width="1" height="1" fill="#333333"/><rect x="48" y="106" width="8" height="1" fill="#a31515"/><rect x="56" y="106" width="1" height="1" fill="#333333"/><rect x="58" y="106" width="8" height="1" fill="#a31515"/><rect x="66" y="106" width="1" height="1" fill="#333333"/><rect x="67" y="106" width="1" height="1" fill="#333333"/><rect x="68" y="106" width="1" height="1" fill="#333333"/><rect x="69" y="106" width="5" height="1" fill="#795e26"/><rect x="74" y="106" width="1" height="1" fill="#333333"/><rect x="75" y="106" width="7" height="1" fill="#a31515"/><rect x="82" y="106" width="1" height="1" fill="#333333"/><rect x="84" y="106" width="6" height="1" fill="#001080"/><rect x="90" y="106" width="1" height="1" fill="#333333"/><rect x="91" y="106" width="1" height="1" fill="#333333"/><rect x="92" y="106" width="1" height="1" fill="#333333"/><rect x="93" y="106" width="5" height="1" fill="#795e26"/><rect x="98" y="106" width="1" height="1" fill="#333333"/><rect x="99" y="106" width="6" height="1" fill="#a31515"/><rect x="105" y="106" width="1" height="1" fill="#333333"/><rect x="9" y="108" width="4" height="1" fill="#a31515"/><rect x="13" y="108" width="1" height="1" fill="#333333"/><rect x="15" y="108" width="6" height="1" fill="#a31515"/><rect x="21" y="108" width="1" height="1" fill="#333333"/><rect x="22" y="108" width="1" height="1" fill="#333333"/><rect x="23" y="108" width="1" height="1" fill="#333333"/><rect x="24" y="108" width="5" height="1" fill="#795e26"/><rect x="29" y="108" width="1" height="1" fill="#333333"/><rect x="30" y="108" width="1" height="1" fill="#333333"/><rect x="31" y="108" width="1" height="1" fill="#333333"/><rect x="32" y="108" width="1" height="1" fill="#333333"/><rect x="34" y="108" width="1" height="1" fill="#333333"/><rect x="13" y="110" width="6" height="1" fill="#af00db"/><rect x="20" y="110" width="1" height="1" fill="#333333"/><rect x="17" y="112" width="6" height="1" fill="#a31515"/><rect x="24" y="112" width="1" height="1" fill="#333333"/><rect x="25" y="112" width="1" height="1" fill="#333333"/><rect x="27" y="112" width="1" height="1" fill="#098658"/><rect x="28" y="112" width="1" height="1" fill="#333333"/><rect x="17" y="114" width="8" height="1" fill="#a31515"/><rect x="26" y="114" width="1" height="1" fill="#333333"/><rect x="27" y="114" width="1" height="1" fill="#333333"/><rect x="29" y="114" width="7" height="1" fill="#a31515"/><rect x="36" y="114" width="1" height="1" fill="#333333"/><rect x="17" y="116" width="10" height="1" fill="#a31515"/><rect x="28" y="116" width="1" height="1" fill="#333333"/><rect x="29" y="116" width="1" height="1" fill="#333333"/><rect x="31" y="116" width="1" height="1" fill="#333333"/><rect x="21" y="118" width="1" height="1" fill="#333333"/><rect x="25" y="120" width="6" height="1" fill="#a31515"/><rect x="32" y="120" width="1" height="1" fill="#333333"/><rect x="33" y="120" width="1" height="1" fill="#333333"/><rect x="35" y="120" width="2" height="1" fill="#a31515"/><rect x="37" y="120" width="1" height="1" fill="#333333"/><rect x="25" y="122" width="9" height="1" fill="#a31515"/><rect x="35" y="122" width="1" height="1" fill="#333333"/><rect x="36" y="122" width="1" height="1" fill="#333333"/><rect x="38" y="122" width="4" height="1" fill="#a31515"/><rect x="43" y="122" width="2" height="1" fill="#a31515"/><rect x="46" y="122" width="5" height="1" fill="#a31515"/><rect x="52" y="122" width="8" height="1" fill="#a31515"/><rect x="61" y="122" width="4" height="1" fill="#a31515"/><rect x="66" y="122" width="7" height="1" fill="#a31515"/><rect x="73" y="122" width="1" height="1" fill="#333333"/><rect x="21" y="124" width="1" height="1" fill="#333333"/><rect x="17" y="126" width="1" height="1" fill="#333333"/><rect x="18" y="126" width="1" height="1" fill="#333333"/><rect x="17" y="128" width="6" height="1" fill="#a31515"/><rect x="24" y="128" width="1" height="1" fill="#333333"/><rect x="25" y="128" width="1" height="1" fill="#333333"/><rect x="27" y="128" width="1" height="1" fill="#333333"/><rect x="28" y="128" width="1" height="1" fill="#333333"/><rect x="13" y="130" width="1" height="1" fill="#333333"/><rect x="14" y="130" width="1" height="1" fill="#333333"/><rect x="9" y="132" width="1" height="1" fill="#333333"/><rect x="9" y="136" width="5" height="1" fill="#001080"/><rect x="15" y="136" width="1" height="1" fill="#333333"/><rect x="17" y="136" width="7" height="1" fill="#267f99"/><rect x="24" y="136" width="1" height="1" fill="#333333"/><rect x="25" y="136" width="1" height="1" fill="#333333"/><rect x="26" y="136" width="5" height="1" fill="#795e26"/><rect x="31" y="136" width="1" height="1" fill="#333333"/><rect x="32" y="136" width="6" height="1" fill="#a31515"/><rect x="38" y="136" width="1" height="1" fill="#333333"/><rect x="40" y="136" width="6" height="1" fill="#a31515"/><rect x="46" y="136" width="1" height="1" fill="#333333"/><rect x="48" y="136" width="7" height="1" fill="#795e26"/><rect x="55" y="136" width="1" height="1" fill="#333333"/><rect x="56" y="136" width="3" height="1" fill="#a31515"/><rect x="59" y="136" width="1" height="1" fill="#333333"/><rect x="60" y="136" width="1" height="1" fill="#333333"/><rect x="61" y="136" width="1" height="1" fill="#333333"/><rect x="9" y="138" width="6" height="1" fill="#af00db"/><rect x="16" y="138" width="1" height="1" fill="#333333"/><rect x="13" y="140" width="6" height="1" fill="#a31515"/><rect x="20" y="140" width="1" height="1" fill="#333333"/><rect x="21" y="140" width="1" height="1" fill="#333333"/><rect x="23" y="140" width="1" height="1" fill="#098658"/><rect x="24" y="140" width="1" height="1" fill="#333333"/><rect x="13" y="142" width="8" height="1" fill="#a31515"/><rect x="22" y="142" width="1" height="1" fill="#333333"/><rect x="23" y="142" width="1" height="1" fill="#333333"/><rect x="25" y="142" width="9" height="1" fill="#a31515"/><rect x="34" y="142" width="1" height="1" fill="#333333"/><rect x="13" y="144" width="10" height="1" fill="#a31515"/><rect x="24" y="144" width="1" height="1" fill="#333333"/><rect x="25" y="144" width="1" height="1" fill="#333333"/><rect x="27" y="144" width="1" height="1" fill="#333333"/><rect x="28" y="144" width="1" height="1" fill="#333333"/><rect x="29" y="144" width="1" height="1" fill="#333333"/><rect x="13" y="146" width="6" height="1" fill="#a31515"/><rect x="20" y="146" width="1" height="1" fill="#333333"/><rect x="21" y="146" width="1" height="1" fill="#333333"/><rect x="23" y="146" width="5" height="1" fill="#001080"/><rect x="9" y="148" width="1" height="1" fill="#333333"/><rect x="10" y="148" width="1" height="1" fill="#333333"/><rect x="5" y="150" width="1" height="1" fill="#333333"/><rect x="5" y="154" width="6" height="1" fill="#0000ff"/><rect x="12" y="154" width="8" height="1" fill="#0000ff"/><rect x="21" y="154" width="5" height="1" fill="#795e26"/><rect x="26" y="154" width="1" height="1" fill="#333333"/><rect x="27" y="154" width="1" height="1" fill="#333333"/><rect x="5" y="156" width="1" height="1" fill="#333333"/><rect x="9" y="158" width="8" height="1" fill="#001080"/><rect x="18" y="158" width="1" height="1" fill="#333333"/><rect x="20" y="158" width="22" height="1" fill="#795e26"/><rect x="42" y="158" width="1" height="1" fill="#333333"/><rect x="43" y="158" width="1" height="1" fill="#333333"/><rect x="44" y="158" width="1" height="1" fill="#333333"/><rect x="9" y="160" width="6" height="1" fill="#001080"/><rect x="16" y="160" width="1" height="1" fill="#333333"/><rect x="18" y="160" width="1" height="1" fill="#333333"/><rect x="19" y="160" width="5" height="1" fill="#795e26"/><rect x="24" y="160" width="1" height="1" fill="#333333"/><rect x="25" y="160" width="8" height="1" fill="#001080"/><rect x="33" y="160" width="1" height="1" fill="#333333"/><rect x="34" y="160" width="7" height="1" fill="#a31515"/><rect x="41" y="160" width="1" height="1" fill="#333333"/><rect x="42" y="160" width="1" height="1" fill="#333333"/><rect x="44" y="160" width="1" height="1" fill="#333333"/><rect x="46" y="160" width="8" height="1" fill="#001080"/><rect x="54" y="160" width="1" height="1" fill="#333333"/><rect x="55" y="160" width="7" height="1" fill="#a31515"/><rect x="62" y="160" width="1" height="1" fill="#333333"/><rect x="64" y="160" width="1" height="1" fill="#333333"/><rect x="66" y="160" width="2" height="1" fill="#a31515"/><rect x="68" y="160" width="1" height="1" fill="#333333"/><rect x="9" y="162" width="2" height="1" fill="#af00db"/><rect x="12" y="162" width="1" height="1" fill="#333333"/><rect x="13" y="162" width="5" height="1" fill="#795e26"/><rect x="18" y="162" width="1" height="1" fill="#333333"/><rect x="19" y="162" width="6" height="1" fill="#001080"/><rect x="25" y="162" width="1" height="1" fill="#333333"/><rect x="27" y="162" width="2" height="1" fill="#af00db"/><rect x="30" y="162" width="5" height="1" fill="#795e26"/><rect x="35" y="162" width="1" height="1" fill="#333333"/><rect x="36" y="162" width="4" height="1" fill="#267f99"/><rect x="40" y="162" width="1" height="1" fill="#333333"/><rect x="41" y="162" width="1" height="1" fill="#333333"/><rect x="42" y="162" width="5" height="1" fill="#795e26"/><rect x="47" y="162" width="1" height="1" fill="#333333"/><rect x="48" y="162" width="8" height="1" fill="#a31515"/><rect x="56" y="162" width="1" height="1" fill="#333333"/><rect x="58" y="162" width="8" height="1" fill="#a31515"/><rect x="66" y="162" width="1" height="1" fill="#333333"/><rect x="67" y="162" width="1" height="1" fill="#333333"/><rect x="68" y="162" width="1" height="1" fill="#333333"/><rect x="69" y="162" width="5" height="1" fill="#795e26"/><rect x="74" y="162" width="1" height="1" fill="#333333"/><rect x="75" y="162" width="7" height="1" fill="#a31515"/><rect x="82" y="162" width="1" height="1" fill="#333333"/><rect x="84" y="162" width="6" height="1" fill="#001080"/><rect x="90" y="162" width="1" height="1" fill="#333333"/><rect x="91" y="162" width="1" height="1" fill="#333333"/><rect x="92" y="162" width="1" height="1" fill="#333333"/><rect x="93" y="162" width="5" height="1" fill="#795e26"/><rect x="98" y="162" width="1" height="1" fill="#333333"/><rect x="99" y="162" width="6" height="1" fill="#a31515"/><rect x="105" y="162" width="1" height="1" fill="#333333"/><rect x="9" y="164" width="4" height="1" fill="#a31515"/><rect x="13" y="164" width="1" height="1" fill="#333333"/><rect x="15" y="164" width="6" height="1" fill="#a31515"/><rect x="21" y="164" width="1" height="1" fill="#333333"/><rect x="22" y="164" width="1" height="1" fill="#333333"/><rect x="23" y="164" width="1" height="1" fill="#333333"/><rect x="24" y="164" width="5" height="1" fill="#795e26"/><rect x="29" y="164" width="1" height="1" fill="#333333"/><rect x="30" y="164" width="1" height="1" fill="#333333"/><rect x="31" y="164" width="1" height="1" fill="#333333"/><rect x="32" y="164" width="1" height="1" fill="#333333"/><rect x="34" y="164" width="1" height="1" fill="#333333"/><rect x="13" y="166" width="6" height="1" fill="#af00db"/><rect x="20" y="166" width="1" height="1" fill="#333333"/><rect x="17" y="168" width="6" height="1" fill="#a31515"/><rect x="24" y="168" width="1" height="1" fill="#333333"/><rect x="25" y="168" width="1" height="1" fill="#333333"/><rect x="27" y="168" width="1" height="1" fill="#098658"/><rect x="28" y="168" width="1" height="1" fill="#333333"/><rect x="17" y="170" width="8" height="1" fill="#a31515"/><rect x="26" y="170" width="1" height="1" fill="#333333"/><rect x="27" y="170" width="1" height="1" fill="#333333"/><rect x="29" y="170" width="7" height="1" fill="#a31515"/><rect x="36" y="170" width="1" height="1" fill="#333333"/><rect x="17" y="172" width="10" height="1" fill="#a31515"/><rect x="28" y="172" width="1" height="1" fill="#333333"/><rect x="29" y="172" width="1" height="1" fill="#333333"/><rect x="31" y="172" width="1" height="1" fill="#333333"/><rect x="21" y="174" width="1" height="1" fill="#333333"/><rect x="25" y="176" width="6" height="1" fill="#a31515"/><rect x="32" y="176" width="1" height="1" fill="#333333"/><rect x="33" y="176" width="1" height="1" fill="#333333"/><rect x="35" y="176" width="2" height="1" fill="#a31515"/><rect x="37" y="176" width="1" height="1" fill="#333333"/><rect x="25" y="178" width="9" height="1" fill="#a31515"/><rect x="35" y="178" width="1" height="1" fill="#333333"/><rect x="36" y="178" width="1" height="1" fill="#333333"/><rect x="38" y="178" width="4" height="1" fill="#a31515"/><rect x="43" y="178" width="2" height="1" fill="#a31515"/><rect x="46" y="178" width="5" height="1" fill="#a31515"/><rect x="52" y="178" width="8" height="1" fill="#a31515"/><rect x="61" y="178" width="4" height="1" fill="#a31515"/><rect x="66" y="178" width="7" height="1" fill="#a31515"/><rect x="73" y="178" width="1" height="1" fill="#333333"/><rect x="21" y="180" width="1" height="1" fill="#333333"/><rect x="17" y="182" width="1" height="1" fill="#333333"/><rect x="18" y="182" width="1" height="1" fill="#333333"/><rect x="17" y="184" width="6" height="1" fill="#a31515"/><rect x="24" y="184" width="1" height="1" fill="#333333"/><rect x="25" y="184" width="1" height="1" fill="#333333"/><rect x="27" y="184" width="1" height="1" fill="#333333"/><rect x="28" y="184" width="1" height="1" fill="#333333"/><rect x="13" y="186" width="1" height="1" fill="#333333"/><rect x="14" y="186" width="1" height="1" fill="#333333"/><rect x="9" y="188" width="1" height="1" fill="#333333"/><rect x="9" y="192" width="2" height="1" fill="#af00db"/><rect x="12" y="192" width="1" height="1" fill="#333333"/><rect x="13" y="192" width="5" height="1" fill="#795e26"/><rect x="18" y="192" width="1" height="1" fill="#333333"/><rect x="19" y="192" width="7" height="1" fill="#795e26"/><rect x="26" y="192" width="1" height="1" fill="#333333"/><rect x="27" y="192" width="6" height="1" fill="#a31515"/><rect x="33" y="192" width="1" height="1" fill="#333333"/><rect x="34" y="192" width="1" height="1" fill="#333333"/><rect x="35" y="192" width="1" height="1" fill="#333333"/><rect x="37" y="192" width="1" height="1" fill="#333333"/><rect x="13" y="194" width="6" height="1" fill="#af00db"/><rect x="20" y="194" width="1" height="1" fill="#333333"/><rect x="17" y="196" width="6" height="1" fill="#a31515"/><rect x="24" y="196" width="1" height="1" fill="#333333"/><rect x="25" y="196" width="1" height="1" fill="#333333"/><rect x="27" y="196" width="1" height="1" fill="#098658"/><rect x="28" y="196" width="1" height="1" fill="#333333"/><rect x="17" y="198" width="8" height="1" fill="#a31515"/><rect x="26" y="198" width="1" height="1" fill="#333333"/><rect x="27" y="198" width="1" height="1" fill="#333333"/><rect x="29" y="198" width="7" height="1" fill="#a31515"/><rect x="36" y="198" width="1" height="1" fill="#333333"/><rect x="17" y="200" width="10" height="1" fill="#a31515"/><rect x="28" y="200" width="1" height="1" fill="#333333"/><rect x="29" y="200" width="1" height="1" fill="#333333"/><rect x="31" y="200" width="1" height="1" fill="#333333"/><rect x="21" y="202" width="1" height="1" fill="#333333"/><rect x="25" y="204" width="6" height="1" fill="#a31515"/><rect x="32" y="204" width="1" height="1" fill="#333333"/><rect x="33" y="204" width="1" height="1" fill="#333333"/><rect x="35" y="204" width="6" height="1" fill="#a31515"/><rect x="41" y="204" width="1" height="1" fill="#333333"/><rect x="25" y="206" width="9" height="1" fill="#a31515"/><rect x="35" y="206" width="1" height="1" fill="#333333"/><rect x="36" y="206" width="1" height="1" fill="#333333"/><rect x="38" y="206" width="7" height="1" fill="#a31515"/><rect x="46" y="206" width="6" height="1" fill="#a31515"/><rect x="53" y="206" width="2" height="1" fill="#a31515"/><rect x="56" y="206" width="5" height="1" fill="#a31515"/><rect x="62" y="206" width="6" height="1" fill="#a31515"/><rect x="68" y="206" width="1" height="1" fill="#333333"/><rect x="21" y="208" width="1" height="1" fill="#333333"/><rect x="17" y="210" width="1" height="1" fill="#333333"/><rect x="18" y="210" width="1" height="1" fill="#333333"/><rect x="17" y="212" width="6" height="1" fill="#a31515"/><rect x="24" y="212" width="1" height="1" fill="#333333"/><rect x="25" y="212" width="1" height="1" fill="#333333"/><rect x="27" y="212" width="1" height="1" fill="#333333"/><rect x="28" y="212" width="1" height="1" fill="#333333"/><rect x="13" y="214" width="1" height="1" fill="#333333"/><rect x="14" y="214" width="1" height="1" fill="#333333"/><rect x="9" y="216" width="1" height="1" fill="#333333"/><rect x="9" y="220" width="5" height="1" fill="#001080"/><rect x="15" y="220" width="1" height="1" fill="#333333"/><rect x="17" y="220" width="7" height="1" fill="#267f99"/><rect x="24" y="220" width="1" height="1" fill="#333333"/><rect x="25" y="220" width="1" height="1" fill="#333333"/><rect x="26" y="220" width="5" height="1" fill="#795e26"/><rect x="31" y="220" width="1" height="1" fill="#333333"/><rect x="32" y="220" width="6" height="1" fill="#a31515"/><rect x="38" y="220" width="1" height="1" fill="#333333"/><rect x="40" y="220" width="7" height="1" fill="#795e26"/><rect x="47" y="220" width="1" height="1" fill="#333333"/><rect x="48" y="220" width="6" height="1" fill="#a31515"/><rect x="54" y="220" width="1" height="1" fill="#333333"/><rect x="55" y="220" width="1" height="1" fill="#333333"/><rect x="56" y="220" width="1" height="1" fill="#333333"/><rect x="57" y="220" width="1" height="1" fill="#333333"/><rect x="58" y="220" width="5" height="1" fill="#795e26"/><rect x="63" y="220" width="1" height="1" fill="#333333"/><rect x="64" y="220" width="1" height="1" fill="#333333"/><rect x="65" y="220" width="1" height="1" fill="#333333"/><rect x="9" y="224" width="2" height="1" fill="#af00db"/><rect x="12" y="224" width="1" height="1" fill="#333333"/><rect x="13" y="224" width="5" height="1" fill="#795e26"/><rect x="18" y="224" width="1" height="1" fill="#333333"/><rect x="19" y="224" width="5" height="1" fill="#001080"/><rect x="24" y="224" width="1" height="1" fill="#333333"/><rect x="25" y="224" width="1" height="1" fill="#333333"/><rect x="27" y="224" width="1" height="1" fill="#333333"/><rect x="13" y="226" width="6" height="1" fill="#af00db"/><rect x="20" y="226" width="1" height="1" fill="#333333"/><rect x="17" y="228" width="6" height="1" fill="#a31515"/><rect x="24" y="228" width="1" height="1" fill="#333333"/><rect x="25" y="228" width="1" height="1" fill="#333333"/><rect x="27" y="228" width="1" height="1" fill="#098658"/><rect x="28" y="228" width="1" height="1" fill="#333333"/><rect x="17" y="230" width="8" height="1" fill="#a31515"/><rect x="26" y="230" width="1" height="1" fill="#333333"/><rect x="27" y="230" width="1" height="1" fill="#333333"/><rect x="29" y="230" width="7" height="1" fill="#a31515"/><rect x="36" y="230" width="1" height="1" fill="#333333"/><rect x="17" y="232" width="10" height="1" fill="#a31515"/><rect x="28" y="232" width="1" height="1" fill="#333333"/><rect x="29" y="232" width="1" height="1" fill="#333333"/><rect x="31" y="232" width="1" height="1" fill="#333333"/><rect x="21" y="234" width="1" height="1" fill="#333333"/><rect x="25" y="236" width="6" height="1" fill="#a31515"/><rect x="32" y="236" width="1" height="1" fill="#333333"/><rect x="33" y="236" width="1" height="1" fill="#333333"/><rect x="35" y="236" width="2" height="1" fill="#a31515"/><rect x="37" y="236" width="1" height="1" fill="#333333"/><rect x="25" y="238" width="9" height="1" fill="#a31515"/><rect x="35" y="238" width="1" height="1" fill="#333333"/><rect x="36" y="238" width="1" height="1" fill="#333333"/><rect x="38" y="238" width="3" height="1" fill="#a31515"/><rect x="42" y="238" width="4" height="1" fill="#a31515"/><rect x="47" y="238" width="5" height="1" fill="#a31515"/><rect x="52" y="238" width="1" height="1" fill="#333333"/><rect x="21" y="240" width="1" height="1" fill="#333333"/><rect x="17" y="242" width="1" height="1" fill="#333333"/><rect x="18" y="242" width="1" height="1" fill="#333333"/><rect x="17" y="244" width="6" height="1" fill="#a31515"/><rect x="24" y="244" width="1" height="1" fill="#333333"/><rect x="25" y="244" width="1" height="1" fill="#333333"/><rect x="27" y="244" width="1" height="1" fill="#333333"/><rect x="28" y="244" width="1" height="1" fill="#333333"/><rect x="13" y="246" width="1" height="1" fill="#333333"/><rect x="14" y="246" width="1" height="1" fill="#333333"/><rect x="9" y="248" width="1" height="1" fill="#333333"/><rect x="9" y="252" width="6" height="1" fill="#af00db"/><rect x="16" y="252" width="1" height="1" fill="#333333"/><rect x="13" y="254" width="6" height="1" fill="#a31515"/><rect x="20" y="254" width="1" height="1" fill="#333333"/><rect x="21" y="254" width="1" height="1" fill="#333333"/><rect x="23" y="254" width="1" height="1" fill="#098658"/><rect x="24" y="254" width="1" height="1" fill="#333333"/><rect x="13" y="256" width="8" height="1" fill="#a31515"/><rect x="22" y="256" width="1" height="1" fill="#333333"/><rect x="23" y="256" width="1" height="1" fill="#333333"/><rect x="25" y="256" width="9" height="1" fill="#a31515"/><rect x="34" y="256" width="1" height="1" fill="#333333"/><rect x="13" y="258" width="10" height="1" fill="#a31515"/><rect x="24" y="258" width="1" height="1" fill="#333333"/><rect x="25" y="258" width="1" height="1" fill="#333333"/><rect x="27" y="258" width="1" height="1" fill="#333333"/><rect x="28" y="258" width="1" height="1" fill="#333333"/><rect x="29" y="258" width="1" height="1" fill="#333333"/><rect x="13" y="260" width="6" height="1" fill="#a31515"/><rect x="20" y="260" width="1" height="1" fill="#333333"/><rect x="21" y="260" width="1" height="1" fill="#333333"/><rect x="23" y="260" width="5" height="1" fill="#001080"/><rect x="9" y="262" width="1" height="1" fill="#333333"/><rect x="10" y="262" width="1" height="1" fill="#333333"/><rect x="5" y="264" width="1" height="1" fill="#333333"/><rect x="5" y="268" width="6" height="1" fill="#0000ff"/><rect x="12" y="268" width="8" height="1" fill="#0000ff"/><rect x="21" y="268" width="4" height="1" fill="#795e26"/><rect x="25" y="268" width="1" height="1" fill="#333333"/><rect x="26" y="268" width="1" height="1" fill="#333333"/><rect x="5" y="270" width="1" height="1" fill="#333333"/><rect x="9" y="274" width="8" height="1" fill="#001080"/><rect x="18" y="274" width="1" height="1" fill="#333333"/><rect x="20" y="274" width="22" height="1" fill="#795e26"/><rect x="42" y="274" width="1" height="1" fill="#333333"/><rect x="43" y="274" width="1" height="1" fill="#333333"/><rect x="44" y="274" width="1" height="1" fill="#333333"/><rect x="9" y="276" width="6" height="1" fill="#001080"/><rect x="16" y="276" width="1" height="1" fill="#333333"/><rect x="18" y="276" width="1" height="1" fill="#333333"/><rect x="19" y="276" width="5" height="1" fill="#795e26"/><rect x="24" y="276" width="1" height="1" fill="#333333"/><rect x="25" y="276" width="8" height="1" fill="#001080"/><rect x="33" y="276" width="1" height="1" fill="#333333"/><rect x="34" y="276" width="7" height="1" fill="#a31515"/><rect x="41" y="276" width="1" height="1" fill="#333333"/><rect x="42" y="276" width="1" height="1" fill="#333333"/><rect x="44" y="276" width="1" height="1" fill="#333333"/><rect x="46" y="276" width="8" height="1" fill="#001080"/><rect x="54" y="276" width="1" height="1" fill="#333333"/><rect x="55" y="276" width="7" height="1" fill="#a31515"/><rect x="62" y="276" width="1" height="1" fill="#333333"/><rect x="64" y="276" width="1" height="1" fill="#333333"/><rect x="66" y="276" width="2" height="1" fill="#a31515"/><rect x="68" y="276" width="1" height="1" fill="#333333"/><rect x="9" y="278" width="2" height="1" fill="#af00db"/><rect x="12" y="278" width="1" height="1" fill="#333333"/><rect x="13" y="278" width="5" height="1" fill="#795e26"/><rect x="18" y="278" width="1" height="1" fill="#333333"/><rect x="19" y="278" width="6" height="1" fill="#001080"/><rect x="25" y="278" width="1" height="1" fill="#333333"/><rect x="27" y="278" width="2" height="1" fill="#af00db"/><rect x="30" y="278" width="5" height="1" fill="#795e26"/><rect x="35" y="278" width="1" height="1" fill="#333333"/><rect x="36" y="278" width="4" height="1" fill="#267f99"/><rect x="40" y="278" width="1" height="1" fill="#333333"/><rect x="41" y="278" width="1" height="1" fill="#333333"/><rect x="42" y="278" width="5" height="1" fill="#795e26"/><rect x="47" y="278" width="1" height="1" fill="#333333"/><rect x="48" y="278" width="8" height="1" fill="#a31515"/><rect x="56" y="278" width="1" height="1" fill="#333333"/><rect x="58" y="278" width="8" height="1" fill="#a31515"/><rect x="66" y="278" width="1" height="1" fill="#333333"/><rect x="67" y="278" width="1" height="1" fill="#333333"/><rect x="68" y="278" width="1" height="1" fill="#333333"/><rect x="69" y="278" width="5" height="1" fill="#795e26"/><rect x="74" y="278" width="1" height="1" fill="#333333"/><rect x="75" y="278" width="7" height="1" fill="#a31515"/><rect x="82" y="278" width="1" height="1" fill="#333333"/><rect x="84" y="278" width="6" height="1" fill="#001080"/><rect x="90" y="278" width="1" height="1" fill="#333333"/><rect x="91" y="278" width="1" height="1" fill="#333333"/><rect x="92" y="278" width="1" height="1" fill="#333333"/><rect x="93" y="278" width="5" height="1" fill="#795e26"/><rect x="98" y="278" width="1" height="1" fill="#333333"/><rect x="99" y="278" width="6" height="1" fill="#a31515"/><rect x="105" y="278" width="1" height="1" fill="#333333"/><rect x="9" y="280" width="4" height="1" fill="#a31515"/><rect x="13" y="280" width="1" height="1" fill="#333333"/><rect x="15" y="280" width="6" height="1" fill="#a31515"/><rect x="21" y="280" width="1" height="1" fill="#333333"/><rect x="22" y="280" width="1" height="1" fill="#333333"/><rect x="23" y="280" width="1" height="1" fill="#333333"/><rect x="24" y="280" width="5" height="1" fill="#795e26"/><rect x="29" y="280" width="1" height="1" fill="#333333"/><rect x="30" y="280" width="1" height="1" fill="#333333"/><rect x="31" y="280" width="1" height="1" fill="#333333"/><rect x="32" y="280" width="1" height="1" fill="#333333"/><rect x="34" y="280" width="1" height="1" fill="#333333"/><rect x="13" y="282" width="6" height="1" fill="#af00db"/><rect x="20" y="282" width="1" height="1" fill="#333333"/><rect x="17" y="284" width="6" height="1" fill="#a31515"/><rect x="24" y="284" width="1" height="1" fill="#333333"/><rect x="25" y="284" width="1" height="1" fill="#333333"/><rect x="27" y="284" width="1" height="1" fill="#098658"/><rect x="28" y="284" width="1" height="1" fill="#333333"/><rect x="17" y="286" width="8" height="1" fill="#a31515"/><rect x="26" y="286" width="1" height="1" fill="#333333"/><rect x="27" y="286" width="1" height="1" fill="#333333"/><rect x="29" y="286" width="7" height="1" fill="#a31515"/><rect x="36" y="286" width="1" height="1" fill="#333333"/><rect x="17" y="288" width="10" height="1" fill="#a31515"/><rect x="28" y="288" width="1" height="1" fill="#333333"/><rect x="29" y="288" width="1" height="1" fill="#333333"/><rect x="31" y="288" width="1" height="1" fill="#333333"/><rect x="21" y="290" width="1" height="1" fill="#333333"/><rect x="25" y="292" width="6" height="1" fill="#a31515"/><rect x="32" y="292" width="1" height="1" fill="#333333"/><rect x="33" y="292" width="1" height="1" fill="#333333"/><rect x="35" y="292" width="2" height="1" fill="#a31515"/><rect x="37" y="292" width="1" height="1" fill="#333333"/><rect x="25" y="294" width="9" height="1" fill="#a31515"/><rect x="35" y="294" width="1" height="1" fill="#333333"/><rect x="36" y="294" width="1" height="1" fill="#333333"/><rect x="38" y="294" width="4" height="1" fill="#a31515"/><rect x="43" y="294" width="2" height="1" fill="#a31515"/><rect x="46" y="294" width="5" height="1" fill="#a31515"/><rect x="52" y="294" width="8" height="1" fill="#a31515"/><rect x="61" y="294" width="4" height="1" fill="#a31515"/><rect x="66" y="294" width="7" height="1" fill="#a31515"/><rect x="73" y="294" width="1" height="1" fill="#333333"/><rect x="21" y="296" width="1" height="1" fill="#333333"/><rect x="17" y="298" width="1" height="1" fill="#333333"/><rect x="18" y="298" width="1" height="1" fill="#333333"/><rect x="17" y="300" width="6" height="1" fill="#a31515"/><rect x="24" y="300" width="1" height="1" fill="#333333"/><rect x="25" y="300" width="1" height="1" fill="#333333"/><rect x="27" y="300" width="1" height="1" fill="#333333"/><rect x="28" y="300" width="1" height="1" fill="#333333"/><rect x="13" y="302" width="1" height="1" fill="#333333"/><rect x="14" y="302" width="1" height="1" fill="#333333"/><rect x="9" y="304" width="1" height="1" fill="#333333"/><rect x="9" y="308" width="6" height="1" fill="#af00db"/><rect x="16" y="308" width="3" height="1" fill="#098658"/><rect x="19" y="308" width="1" height="1" fill="#333333"/><rect x="9" y="312" width="2" height="1" fill="#af00db"/><rect x="12" y="312" width="1" height="1" fill="#333333"/><rect x="13" y="312" width="5" height="1" fill="#795e26"/><rect x="18" y="312" width="1" height="1" fill="#333333"/><rect x="19" y="312" width="7" height="1" fill="#795e26"/><rect x="26" y="312" width="1" height="1" fill="#333333"/><rect x="27" y="312" width="4" height="1" fill="#a31515"/><rect x="31" y="312" width="1" height="1" fill="#333333"/><rect x="32" y="312" width="1" height="1" fill="#333333"/><rect x="33" y="312" width="1" height="1" fill="#333333"/><rect x="35" y="312" width="1" height="1" fill="#333333"/><rect x="13" y="314" width="6" height="1" fill="#af00db"/><rect x="20" y="314" width="1" height="1" fill="#333333"/><rect x="17" y="316" width="6" height="1" fill="#a31515"/><rect x="24" y="316" width="1" height="1" fill="#333333"/><rect x="25" y="316" width="1" height="1" fill="#333333"/><rect x="27" y="316" width="6" height="1" fill="#a31515"/><rect x="33" y="316" width="1" height="1" fill="#333333"/><rect x="17" y="318" width="9" height="1" fill="#a31515"/><rect x="27" y="318" width="1" height="1" fill="#333333"/><rect x="28" y="318" width="1" height="1" fill="#333333"/><rect x="30" y="318" width="4" height="1" fill="#a31515"/><rect x="35" y="318" width="2" height="1" fill="#a31515"/><rect x="38" y="318" width="6" height="1" fill="#a31515"/><rect x="44" y="318" width="1" height="1" fill="#333333"/><rect x="13" y="320" width="1" height="1" fill="#333333"/><rect x="14" y="320" width="1" height="1" fill="#333333"/><rect x="9" y="322" width="1" height="1" fill="#333333"/><rect x="9" y="328" width="2" height="1" fill="#af00db"/><rect x="12" y="328" width="1" height="1" fill="#333333"/><rect x="13" y="328" width="9" height="1" fill="#795e26"/><rect x="22" y="328" width="1" height="1" fill="#333333"/><rect x="23" y="328" width="7" height="1" fill="#795e26"/><rect x="30" y="328" width="1" height="1" fill="#333333"/><rect x="31" y="328" width="8" height="1" fill="#a31515"/><rect x="39" y="328" width="1" height="1" fill="#333333"/><rect x="40" y="328" width="1" height="1" fill="#333333"/><rect x="42" y="328" width="1" height="1" fill="#333333"/><rect x="43" y="328" width="7" height="1" fill="#a31515"/><rect x="50" y="328" width="1" height="1" fill="#333333"/><rect x="52" y="328" width="10" height="1" fill="#a31515"/><rect x="62" y="328" width="1" height="1" fill="#333333"/><rect x="63" y="328" width="1" height="1" fill="#333333"/><rect x="64" y="328" width="1" height="1" fill="#333333"/><rect x="66" y="328" width="1" height="1" fill="#333333"/><rect x="13" y="330" width="6" height="1" fill="#af00db"/><rect x="20" y="330" width="1" height="1" fill="#333333"/><rect x="17" y="332" width="6" height="1" fill="#a31515"/><rect x="24" y="332" width="1" height="1" fill="#333333"/><rect x="25" y="332" width="1" height="1" fill="#333333"/><rect x="27" y="332" width="8" height="1" fill="#a31515"/><rect x="35" y="332" width="1" height="1" fill="#333333"/><rect x="17" y="334" width="9" height="1" fill="#a31515"/><rect x="27" y="334" width="1" height="1" fill="#333333"/><rect x="28" y="334" width="1" height="1" fill="#333333"/><rect x="30" y="334" width="5" height="1" fill="#a31515"/><rect x="36" y="334" width="4" height="1" fill="#a31515"/><rect x="41" y="334" width="2" height="1" fill="#a31515"/><rect x="44" y="334" width="7" height="1" fill="#a31515"/><rect x="51" y="334" width="1" height="1" fill="#333333"/><rect x="13" y="336" width="1" height="1" fill="#333333"/><rect x="14" y="336" width="1" height="1" fill="#333333"/><rect x="9" y="338" width="1" height="1" fill="#333333"/><rect x="9" y="342" width="2" height="1" fill="#af00db"/><rect x="12" y="342" width="1" height="1" fill="#333333"/><rect x="13" y="342" width="5" height="1" fill="#795e26"/><rect x="18" y="342" width="1" height="1" fill="#333333"/><rect x="19" y="342" width="8" height="1" fill="#001080"/><rect x="27" y="342" width="1" height="1" fill="#333333"/><rect x="28" y="342" width="1" height="1" fill="#333333"/><rect x="30" y="342" width="1" height="1" fill="#333333"/><rect x="13" y="344" width="6" height="1" fill="#af00db"/><rect x="20" y="344" width="1" height="1" fill="#333333"/><rect x="17" y="346" width="6" height="1" fill="#a31515"/><rect x="24" y="346" width="1" height="1" fill="#333333"/><rect x="25" y="346" width="1" height="1" fill="#333333"/><rect x="27" y="346" width="1" height="1" fill="#098658"/><rect x="28" y="346" width="1" height="1" fill="#333333"/><rect x="17" y="348" width="8" height="1" fill="#a31515"/><rect x="26" y="348" width="1" height="1" fill="#333333"/><rect x="27" y="348" width="1" height="1" fill="#333333"/><rect x="29" y="348" width="7" height="1" fill="#a31515"/><rect x="36" y="348" width="1" height="1" fill="#333333"/><rect x="17" y="350" width="10" height="1" fill="#a31515"/><rect x="28" y="350" width="1" height="1" fill="#333333"/><rect x="29" y="350" width="1" height="1" fill="#333333"/><rect x="31" y="350" width="7" height="1" fill="#001080"/><rect x="38" y="350" width="1" height="1" fill="#333333"/><rect x="17" y="352" width="6" height="1" fill="#a31515"/><rect x="24" y="352" width="1" height="1" fill="#333333"/><rect x="25" y="352" width="1" height="1" fill="#333333"/><rect x="27" y="352" width="1" height="1" fill="#333333"/><rect x="28" y="352" width="1" height="1" fill="#333333"/><rect x="13" y="354" width="1" height="1" fill="#333333"/><rect x="14" y="354" width="1" height="1" fill="#333333"/><rect x="9" y="356" width="1" height="1" fill="#333333"/><rect x="9" y="362" width="4" height="1" fill="#267f99"/><rect x="13" y="362" width="1" height="1" fill="#333333"/><rect x="14" y="362" width="1" height="1" fill="#333333"/><rect x="15" y="362" width="6" height="1" fill="#795e26"/><rect x="21" y="362" width="1" height="1" fill="#333333"/><rect x="22" y="362" width="1" height="1" fill="#333333"/><rect x="13" y="364" width="6" height="1" fill="#a31515"/><rect x="20" y="364" width="1" height="1" fill="#333333"/><rect x="21" y="364" width="1" height="1" fill="#333333"/><rect x="23" y="364" width="7" height="1" fill="#795e26"/><rect x="30" y="364" width="1" height="1" fill="#333333"/><rect x="31" y="364" width="6" height="1" fill="#a31515"/><rect x="37" y="364" width="1" height="1" fill="#333333"/><rect x="38" y="364" width="1" height="1" fill="#333333"/><rect x="13" y="366" width="7" height="1" fill="#a31515"/><rect x="21" y="366" width="1" height="1" fill="#333333"/><rect x="22" y="366" width="1" height="1" fill="#333333"/><rect x="24" y="366" width="7" height="1" fill="#795e26"/><rect x="31" y="366" width="1" height="1" fill="#333333"/><rect x="32" y="366" width="8" height="1" fill="#a31515"/><rect x="40" y="366" width="1" height="1" fill="#333333"/><rect x="41" y="366" width="1" height="1" fill="#333333"/><rect x="9" y="368" width="1" height="1" fill="#333333"/><rect x="10" y="368" width="1" height="1" fill="#333333"/><rect x="11" y="368" width="1" height="1" fill="#333333"/><rect x="9" y="372" width="5" height="1" fill="#001080"/><rect x="15" y="372" width="1" height="1" fill="#333333"/><rect x="17" y="372" width="4" height="1" fill="#267f99"/><rect x="21" y="372" width="1" height="1" fill="#333333"/><rect x="22" y="372" width="1" height="1" fill="#333333"/><rect x="23" y="372" width="5" height="1" fill="#795e26"/><rect x="28" y="372" width="1" height="1" fill="#333333"/><rect x="29" y="372" width="6" height="1" fill="#a31515"/><rect x="35" y="372" width="1" height="1" fill="#333333"/><rect x="37" y="372" width="7" height="1" fill="#795e26"/><rect x="44" y="372" width="1" height="1" fill="#333333"/><rect x="45" y="372" width="6" height="1" fill="#a31515"/><rect x="51" y="372" width="1" height="1" fill="#333333"/><rect x="52" y="372" width="1" height="1" fill="#333333"/><rect x="53" y="372" width="1" height="1" fill="#333333"/><rect x="54" y="372" width="1" height="1" fill="#333333"/><rect x="55" y="372" width="7" height="1" fill="#795e26"/><rect x="62" y="372" width="1" height="1" fill="#333333"/><rect x="63" y="372" width="4" height="1" fill="#a31515"/><rect x="67" y="372" width="1" height="1" fill="#333333"/><rect x="69" y="372" width="6" height="1" fill="#a31515"/><rect x="75" y="372" width="1" height="1" fill="#333333"/><rect x="76" y="372" width="1" height="1" fill="#333333"/><rect x="77" y="372" width="1" height="1" fill="#333333"/><rect x="78" y="372" width="5" height="1" fill="#795e26"/><rect x="83" y="372" width="1" height="1" fill="#333333"/><rect x="84" y="372" width="1" height="1" fill="#333333"/><rect x="85" y="372" width="1" height="1" fill="#333333"/><rect x="9" y="376" width="6" height="1" fill="#af00db"/><rect x="16" y="376" width="1" height="1" fill="#333333"/><rect x="13" y="378" width="6" height="1" fill="#a31515"/><rect x="20" y="378" width="1" height="1" fill="#333333"/><rect x="21" y="378" width="1" height="1" fill="#333333"/><rect x="23" y="378" width="1" height="1" fill="#098658"/><rect x="24" y="378" width="1" height="1" fill="#333333"/><rect x="13" y="380" width="8" height="1" fill="#a31515"/><rect x="22" y="380" width="1" height="1" fill="#333333"/><rect x="23" y="380" width="1" height="1" fill="#333333"/><rect x="25" y="380" width="9" height="1" fill="#a31515"/><rect x="34" y="380" width="1" height="1" fill="#333333"/><rect x="13" y="382" width="10" height="1" fill="#a31515"/><rect x="24" y="382" width="1" height="1" fill="#333333"/><rect x="25" y="382" width="1" height="1" fill="#333333"/><rect x="27" y="382" width="1" height="1" fill="#333333"/><rect x="28" y="382" width="1" height="1" fill="#333333"/><rect x="29" y="382" width="1" height="1" fill="#333333"/><rect x="13" y="384" width="6" height="1" fill="#a31515"/><rect x="20" y="384" width="1" height="1" fill="#333333"/><rect x="21" y="384" width="1" height="1" fill="#333333"/><rect x="23" y="384" width="5" height="1" fill="#001080"/><rect x="9" y="386" width="1" height="1" fill="#333333"/><rect x="10" y="386" width="1" height="1" fill="#333333"/><rect x="5" y="388" width="1" height="1" fill="#333333"/><rect x="5" y="392" width="6" height="1" fill="#0000ff"/><rect x="12" y="392" width="8" height="1" fill="#0000ff"/><rect x="21" y="392" width="7" height="1" fill="#795e26"/><rect x="28" y="392" width="1" height="1" fill="#333333"/><rect x="29" y="392" width="1" height="1" fill="#333333"/><rect x="5" y="394" width="1" height="1" fill="#333333"/><rect x="5" y="396" width="1" height="1" fill="#333333"/><rect x="5" y="400" width="6" height="1" fill="#0000ff"/><rect x="12" y="400" width="8" height="1" fill="#0000ff"/><rect x="21" y="400" width="8" height="1" fill="#795e26"/><rect x="29" y="400" width="1" height="1" fill="#333333"/><rect x="30" y="400" width="1" height="1" fill="#333333"/><rect x="5" y="402" width="1" height="1" fill="#333333"/><rect x="9" y="404" width="8" height="1" fill="#001080"/><rect x="18" y="404" width="1" height="1" fill="#333333"/><rect x="20" y="404" width="22" height="1" fill="#795e26"/><rect x="42" y="404" width="1" height="1" fill="#333333"/><rect x="43" y="404" width="1" height="1" fill="#333333"/><rect x="44" y="404" width="1" height="1" fill="#333333"/><rect x="9" y="406" width="6" height="1" fill="#001080"/><rect x="16" y="406" width="1" height="1" fill="#333333"/><rect x="18" y="406" width="1" height="1" fill="#333333"/><rect x="19" y="406" width="5" height="1" fill="#795e26"/><rect x="24" y="406" width="1" height="1" fill="#333333"/><rect x="25" y="406" width="8" height="1" fill="#001080"/><rect x="33" y="406" width="1" height="1" fill="#333333"/><rect x="34" y="406" width="7" height="1" fill="#a31515"/><rect x="41" y="406" width="1" height="1" fill="#333333"/><rect x="42" y="406" width="1" height="1" fill="#333333"/><rect x="44" y="406" width="1" height="1" fill="#333333"/><rect x="46" y="406" width="8" height="1" fill="#001080"/><rect x="54" y="406" width="1" height="1" fill="#333333"/><rect x="55" y="406" width="7" height="1" fill="#a31515"/><rect x="62" y="406" width="1" height="1" fill="#333333"/><rect x="64" y="406" width="1" height="1" fill="#333333"/><rect x="66" y="406" width="2" height="1" fill="#a31515"/><rect x="68" y="406" width="1" height="1" fill="#333333"/><rect x="9" y="408" width="2" height="1" fill="#af00db"/><rect x="12" y="408" width="1" height="1" fill="#333333"/><rect x="13" y="408" width="5" height="1" fill="#795e26"/><rect x="18" y="408" width="1" height="1" fill="#333333"/><rect x="19" y="408" width="6" height="1" fill="#001080"/><rect x="25" y="408" width="1" height="1" fill="#333333"/><rect x="27" y="408" width="2" height="1" fill="#af00db"/><rect x="30" y="408" width="5" height="1" fill="#795e26"/><rect x="35" y="408" width="1" height="1" fill="#333333"/><rect x="36" y="408" width="4" height="1" fill="#267f99"/><rect x="40" y="408" width="1" height="1" fill="#333333"/><rect x="41" y="408" width="1" height="1" fill="#333333"/><rect x="42" y="408" width="5" height="1" fill="#795e26"/><rect x="47" y="408" width="1" height="1" fill="#333333"/><rect x="48" y="408" width="8" height="1" fill="#a31515"/><rect x="56" y="408" width="1" height="1" fill="#333333"/><rect x="58" y="408" width="8" height="1" fill="#a31515"/><rect x="66" y="408" width="1" height="1" fill="#333333"/><rect x="67" y="408" width="1" height="1" fill="#333333"/><rect x="68" y="408" width="1" height="1" fill="#333333"/><rect x="69" y="408" width="5" height="1" fill="#795e26"/><rect x="74" y="408" width="1" height="1" fill="#333333"/><rect x="75" y="408" width="7" height="1" fill="#a31515"/><rect x="82" y="408" width="1" height="1" fill="#333333"/><rect x="84" y="408" width="6" height="1" fill="#001080"/><rect x="90" y="408" width="1" height="1" fill="#333333"/><rect x="91" y="408" width="1" height="1" fill="#333333"/><rect x="92" y="408" width="1" height="1" fill="#333333"/><rect x="93" y="408" width="5" height="1" fill="#795e26"/><rect x="98" y="408" width="1" height="1" fill="#333333"/><rect x="99" y="408" width="6" height="1" fill="#a31515"/><rect x="105" y="408" width="1" height="1" fill="#333333"/><rect x="9" y="410" width="4" height="1" fill="#a31515"/><rect x="13" y="410" width="1" height="1" fill="#333333"/><rect x="15" y="410" width="6" height="1" fill="#a31515"/><rect x="21" y="410" width="1" height="1" fill="#333333"/><rect x="22" y="410" width="1" height="1" fill="#333333"/><rect x="23" y="410" width="1" height="1" fill="#333333"/><rect x="24" y="410" width="5" height="1" fill="#795e26"/><rect x="29" y="410" width="1" height="1" fill="#333333"/><rect x="30" y="410" width="1" height="1" fill="#333333"/><rect x="31" y="410" width="1" height="1" fill="#333333"/><rect x="32" y="410" width="1" height="1" fill="#333333"/><rect x="34" y="410" width="1" height="1" fill="#333333"/><rect x="13" y="412" width="6" height="1" fill="#af00db"/><rect x="20" y="412" width="1" height="1" fill="#333333"/><rect x="17" y="414" width="6" height="1" fill="#a31515"/><rect x="24" y="414" width="1" height="1" fill="#333333"/><rect x="25" y="414" width="1" height="1" fill="#333333"/><rect x="27" y="414" width="1" height="1" fill="#098658"/><rect x="28" y="414" width="1" height="1" fill="#333333"/><rect x="17" y="416" width="8" height="1" fill="#a31515"/><rect x="26" y="416" width="1" height="1" fill="#333333"/><rect x="27" y="416" width="1" height="1" fill="#333333"/><rect x="29" y="416" width="7" height="1" fill="#a31515"/><rect x="36" y="416" width="1" height="1" fill="#333333"/><rect x="17" y="418" width="10" height="1" fill="#a31515"/><rect x="28" y="418" width="1" height="1" fill="#333333"/><rect x="29" y="418" width="1" height="1" fill="#333333"/><rect x="31" y="418" width="1" height="1" fill="#333333"/><rect x="21" y="420" width="1" height="1" fill="#333333"/><rect x="25" y="422" width="6" height="1" fill="#a31515"/><rect x="32" y="422" width="1" height="1" fill="#333333"/><rect x="33" y="422" width="1" height="1" fill="#333333"/><rect x="35" y="422" width="2" height="1" fill="#a31515"/><rect x="37" y="422" width="1" height="1" fill="#333333"/><rect x="25" y="424" width="9" height="1" fill="#a31515"/><rect x="35" y="424" width="1" height="1" fill="#333333"/><rect x="36" y="424" width="1" height="1" fill="#333333"/><rect x="38" y="424" width="4" height="1" fill="#a31515"/><rect x="43" y="424" width="2" height="1" fill="#a31515"/><rect x="46" y="424" width="5" height="1" fill="#a31515"/><rect x="52" y="424" width="8" height="1" fill="#a31515"/><rect x="61" y="424" width="4" height="1" fill="#a31515"/><rect x="66" y="424" width="7" height="1" fill="#a31515"/><rect x="73" y="424" width="1" height="1" fill="#333333"/><rect x="21" y="426" width="1" height="1" fill="#333333"/><rect x="17" y="428" width="1" height="1" fill="#333333"/><rect x="18" y="428" width="1" height="1" fill="#333333"/><rect x="17" y="430" width="6" height="1" fill="#a31515"/><rect x="24" y="430" width="1" height="1" fill="#333333"/><rect x="25" y="430" width="1" height="1" fill="#333333"/><rect x="27" y="430" width="1" height="1" fill="#333333"/><rect x="28" y="430" width="1" height="1" fill="#333333"/><rect x="13" y="432" width="1" height="1" fill="#333333"/><rect x="14" y="432" width="1" height="1" fill="#333333"/><rect x="9" y="434" width="1" height="1" fill="#333333"/><rect x="9" y="438" width="5" height="1" fill="#001080"/><rect x="15" y="438" width="1" height="1" fill="#333333"/><rect x="17" y="438" width="7" height="1" fill="#267f99"/><rect x="24" y="438" width="1" height="1" fill="#333333"/><rect x="25" y="438" width="1" height="1" fill="#333333"/><rect x="26" y="438" width="5" height="1" fill="#795e26"/><rect x="31" y="438" width="1" height="1" fill="#333333"/><rect x="32" y="438" width="4" height="1" fill="#a31515"/><rect x="36" y="438" width="1" height="1" fill="#333333"/><rect x="38" y="438" width="3" height="1" fill="#001080"/><rect x="41" y="438" width="1" height="1" fill="#333333"/><rect x="42" y="438" width="1" height="1" fill="#333333"/><rect x="43" y="438" width="1" height="1" fill="#333333"/><rect x="44" y="438" width="5" height="1" fill="#795e26"/><rect x="49" y="438" width="1" height="1" fill="#333333"/><rect x="50" y="438" width="1" height="1" fill="#333333"/><rect x="51" y="438" width="1" height="1" fill="#333333"/><rect x="9" y="442" width="2" height="1" fill="#af00db"/><rect x="12" y="442" width="1" height="1" fill="#333333"/><rect x="13" y="442" width="5" height="1" fill="#795e26"/><rect x="18" y="442" width="1" height="1" fill="#333333"/><rect x="19" y="442" width="5" height="1" fill="#001080"/><rect x="24" y="442" width="1" height="1" fill="#333333"/><rect x="25" y="442" width="1" height="1" fill="#333333"/><rect x="27" y="442" width="1" height="1" fill="#333333"/><rect x="13" y="444" width="6" height="1" fill="#af00db"/><rect x="20" y="444" width="1" height="1" fill="#333333"/><rect x="17" y="446" width="6" height="1" fill="#a31515"/><rect x="24" y="446" width="1" height="1" fill="#333333"/><rect x="25" y="446" width="1" height="1" fill="#333333"/><rect x="27" y="446" width="1" height="1" fill="#098658"/><rect x="28" y="446" width="1" height="1" fill="#333333"/><rect x="17" y="448" width="8" height="1" fill="#a31515"/><rect x="26" y="448" width="1" height="1" fill="#333333"/><rect x="27" y="448" width="1" height="1" fill="#333333"/><rect x="29" y="448" width="7" height="1" fill="#a31515"/><rect x="36" y="448" width="1" height="1" fill="#333333"/><rect x="17" y="450" width="10" height="1" fill="#a31515"/><rect x="28" y="450" width="1" height="1" fill="#333333"/><rect x="29" y="450" width="1" height="1" fill="#333333"/><rect x="31" y="450" width="1" height="1" fill="#333333"/><rect x="21" y="452" width="1" height="1" fill="#333333"/><rect x="25" y="454" width="6" height="1" fill="#a31515"/><rect x="32" y="454" width="1" height="1" fill="#333333"/><rect x="33" y="454" width="1" height="1" fill="#333333"/><rect x="35" y="454" width="2" height="1" fill="#a31515"/><rect x="37" y="454" width="1" height="1" fill="#333333"/><rect x="25" y="456" width="9" height="1" fill="#a31515"/><rect x="35" y="456" width="1" height="1" fill="#333333"/><rect x="36" y="456" width="1" height="1" fill="#333333"/><rect x="38" y="456" width="3" height="1" fill="#a31515"/><rect x="42" y="456" width="5" height="1" fill="#a31515"/><rect x="48" y="456" width="2" height="1" fill="#a31515"/><rect x="51" y="456" width="5" height="1" fill="#a31515"/><rect x="56" y="456" width="1" height="1" fill="#333333"/><rect x="21" y="458" width="1" height="1" fill="#333333"/><rect x="17" y="460" width="1" height="1" fill="#333333"/><rect x="18" y="460" width="1" height="1" fill="#333333"/><rect x="17" y="462" width="6" height="1" fill="#a31515"/><rect x="24" y="462" width="1" height="1" fill="#333333"/><rect x="25" y="462" width="1" height="1" fill="#333333"/><rect x="27" y="462" width="1" height="1" fill="#333333"/><rect x="28" y="462" width="1" height="1" fill="#333333"/><rect x="13" y="464" width="1" height="1" fill="#333333"/><rect x="14" y="464" width="1" height="1" fill="#333333"/><rect x="9" y="466" width="1" height="1" fill="#333333"/><rect x="9" y="470" width="7" height="1" fill="#267f99"/><rect x="16" y="470" width="1" height="1" fill="#333333"/><rect x="17" y="470" width="1" height="1" fill="#333333"/><rect x="18" y="470" width="5" height="1" fill="#795e26"/><rect x="23" y="470" width="1" height="1" fill="#333333"/><rect x="24" y="470" width="4" height="1" fill="#a31515"/><rect x="28" y="470" width="1" height="1" fill="#333333"/><rect x="30" y="470" width="3" height="1" fill="#001080"/><rect x="33" y="470" width="1" height="1" fill="#333333"/><rect x="34" y="470" width="1" height="1" fill="#333333"/><rect x="35" y="470" width="1" height="1" fill="#333333"/><rect x="36" y="470" width="6" height="1" fill="#795e26"/><rect x="42" y="470" width="1" height="1" fill="#333333"/><rect x="43" y="470" width="1" height="1" fill="#333333"/><rect x="44" y="470" width="1" height="1" fill="#333333"/><rect x="9" y="474" width="6" height="1" fill="#af00db"/><rect x="16" y="474" width="1" height="1" fill="#333333"/><rect x="13" y="476" width="6" height="1" fill="#a31515"/><rect x="20" y="476" width="1" height="1" fill="#333333"/><rect x="21" y="476" width="1" height="1" fill="#333333"/><rect x="23" y="476" width="1" height="1" fill="#098658"/><rect x="24" y="476" width="1" height="1" fill="#333333"/><rect x="13" y="478" width="8" height="1" fill="#a31515"/><rect x="22" y="478" width="1" height="1" fill="#333333"/><rect x="23" y="478" width="1" height="1" fill="#333333"/><rect x="25" y="478" width="9" height="1" fill="#a31515"/><rect x="34" y="478" width="1" height="1" fill="#333333"/><rect x="13" y="480" width="10" height="1" fill="#a31515"/><rect x="24" y="480" width="1" height="1" fill="#333333"/><rect x="25" y="480" width="1" height="1" fill="#333333"/><rect x="27" y="480" width="1" height="1" fill="#333333"/><rect x="28" y="480" width="1" height="1" fill="#333333"/><rect x="29" y="480" width="1" height="1" fill="#333333"/><rect x="13" y="482" width="6" height="1" fill="#a31515"/><rect x="20" y="482" width="1" height="1" fill="#333333"/><rect x="21" y="482" width="1" height="1" fill="#333333"/><rect x="23" y="482" width="5" height="1" fill="#001080"/><rect x="9" y="484" width="1" height="1" fill="#333333"/><rect x="10" y="484" width="1" height="1" fill="#333333"/><rect x="5" y="486" width="1" height="1" fill="#333333"/><rect x="5" y="488" width="6" height="1" fill="#0000ff"/><rect x="12" y="488" width="8" height="1" fill="#0000ff"/><rect x="21" y="488" width="8" height="1" fill="#795e26"/><rect x="29" y="488" width="1" height="1" fill="#333333"/><rect x="30" y="488" width="1" height="1" fill="#333333"/><rect x="5" y="490" width="1" height="1" fill="#333333"/><rect x="9" y="492" width="8" height="1" fill="#001080"/><rect x="18" y="492" width="1" height="1" fill="#333333"/><rect x="20" y="492" width="22" height="1" fill="#795e26"/><rect x="42" y="492" width="1" height="1" fill="#333333"/><rect x="43" y="492" width="1" height="1" fill="#333333"/><rect x="44" y="492" width="1" height="1" fill="#333333"/><rect x="9" y="494" width="6" height="1" fill="#001080"/><rect x="16" y="494" width="1" height="1" fill="#333333"/><rect x="18" y="494" width="1" height="1" fill="#333333"/><rect x="19" y="494" width="5" height="1" fill="#795e26"/><rect x="24" y="494" width="1" height="1" fill="#333333"/><rect x="25" y="494" width="8" height="1" fill="#001080"/><rect x="33" y="494" width="1" height="1" fill="#333333"/><rect x="34" y="494" width="7" height="1" fill="#a31515"/><rect x="41" y="494" width="1" height="1" fill="#333333"/><rect x="42" y="494" width="1" height="1" fill="#333333"/><rect x="44" y="494" width="1" height="1" fill="#333333"/><rect x="46" y="494" width="8" height="1" fill="#001080"/><rect x="54" y="494" width="1" height="1" fill="#333333"/><rect x="55" y="494" width="7" height="1" fill="#a31515"/><rect x="62" y="494" width="1" height="1" fill="#333333"/><rect x="64" y="494" width="1" height="1" fill="#333333"/><rect x="66" y="494" width="2" height="1" fill="#a31515"/><rect x="68" y="494" width="1" height="1" fill="#333333"/><rect x="9" y="496" width="2" height="1" fill="#af00db"/><rect x="12" y="496" width="1" height="1" fill="#333333"/><rect x="13" y="496" width="5" height="1" fill="#795e26"/><rect x="18" y="496" width="1" height="1" fill="#333333"/><rect x="19" y="496" width="6" height="1" fill="#001080"/><rect x="25" y="496" width="1" height="1" fill="#333333"/><rect x="27" y="496" width="2" height="1" fill="#af00db"/><rect x="30" y="496" width="5" height="1" fill="#795e26"/><rect x="35" y="496" width="1" height="1" fill="#333333"/><rect x="36" y="496" width="4" height="1" fill="#267f99"/><rect x="40" y="496" width="1" height="1" fill="#333333"/><rect x="41" y="496" width="1" height="1" fill="#333333"/><rect x="42" y="496" width="5" height="1" fill="#795e26"/><rect x="47" y="496" width="1" height="1" fill="#333333"/><rect x="48" y="496" width="8" height="1" fill="#a31515"/><rect x="56" y="496" width="1" height="1" fill="#333333"/><rect x="58" y="496" width="8" height="1" fill="#a31515"/><rect x="66" y="496" width="1" height="1" fill="#333333"/><rect x="67" y="496" width="1" height="1" fill="#333333"/><rect x="68" y="496" width="1" height="1" fill="#333333"/><rect x="69" y="496" width="5" height="1" fill="#795e26"/><rect x="74" y="496" width="1" height="1" fill="#333333"/><rect x="75" y="496" width="7" height="1" fill="#a31515"/><rect x="82" y="496" width="1" height="1" fill="#333333"/><rect x="84" y="496" width="6" height="1" fill="#001080"/><rect x="90" y="496" width="1" height="1" fill="#333333"/><rect x="91" y="496" width="1" height="1" fill="#333333"/><rect x="92" y="496" width="1" height="1" fill="#333333"/><rect x="93" y="496" width="5" height="1" fill="#795e26"/><rect x="98" y="496" width="1" height="1" fill="#333333"/><rect x="99" y="496" width="6" height="1" fill="#a31515"/><rect x="105" y="496" width="1" height="1" fill="#333333"/><rect x="9" y="498" width="4" height="1" fill="#a31515"/><rect x="13" y="498" width="1" height="1" fill="#333333"/><rect x="15" y="498" width="6" height="1" fill="#a31515"/><rect x="21" y="498" width="1" height="1" fill="#333333"/><rect x="22" y="498" width="1" height="1" fill="#333333"/><rect x="23" y="498" width="1" height="1" fill="#333333"/><rect x="24" y="498" width="5" height="1" fill="#795e26"/><rect x="29" y="498" width="1" height="1" fill="#333333"/><rect x="30" y="498" width="1" height="1" fill="#333333"/><rect x="31" y="498" width="1" height="1" fill="#333333"/><rect x="32" y="498" width="1" height="1" fill="#333333"/><rect x="34" y="498" width="1" height="1" fill="#333333"/><rect x="13" y="500" width="6" height="1" fill="#af00db"/><rect x="20" y="500" width="1" height="1" fill="#333333"/><rect x="17" y="502" width="6" height="1" fill="#a31515"/><rect x="24" y="502" width="1" height="1" fill="#333333"/><rect x="25" y="502" width="1" height="1" fill="#333333"/><rect x="27" y="502" width="1" height="1" fill="#098658"/><rect x="28" y="502" width="1" height="1" fill="#333333"/><rect x="17" y="504" width="8" height="1" fill="#a31515"/><rect x="26" y="504" width="1" height="1" fill="#333333"/><rect x="27" y="504" width="1" height="1" fill="#333333"/><rect x="29" y="504" width="7" height="1" fill="#a31515"/><rect x="36" y="504" width="1" height="1" fill="#333333"/><rect x="17" y="506" width="10" height="1" fill="#a31515"/><rect x="28" y="506" width="1" height="1" fill="#333333"/><rect x="29" y="506" width="1" height="1" fill="#333333"/><rect x="31" y="506" width="1" height="1" fill="#333333"/><rect x="21" y="508" width="1" height="1" fill="#333333"/><rect x="25" y="510" width="6" height="1" fill="#a31515"/><rect x="32" y="510" width="1" height="1" fill="#333333"/><rect x="33" y="510" width="1" height="1" fill="#333333"/><rect x="35" y="510" width="2" height="1" fill="#a31515"/><rect x="37" y="510" width="1" height="1" fill="#333333"/><rect x="25" y="512" width="9" height="1" fill="#a31515"/><rect x="35" y="512" width="1" height="1" fill="#333333"/><rect x="36" y="512" width="1" height="1" fill="#333333"/><rect x="38" y="512" width="4" height="1" fill="#a31515"/><rect x="43" y="512" width="2" height="1" fill="#a31515"/><rect x="46" y="512" width="5" height="1" fill="#a31515"/><rect x="52" y="512" width="8" height="1" fill="#a31515"/><rect x="61" y="512" width="4" height="1" fill="#a31515"/><rect x="66" y="512" width="7" height="1" fill="#a31515"/><rect x="73" y="512" width="1" height="1" fill="#333333"/><rect x="21" y="514" width="1" height="1" fill="#333333"/><rect x="17" y="516" width="1" height="1" fill="#333333"/><rect x="18" y="516" width="1" height="1" fill="#333333"/><rect x="17" y="518" width="6" height="1" fill="#a31515"/><rect x="24" y="518" width="1" height="1" fill="#333333"/><rect x="25" y="518" width="1" height="1" fill="#333333"/><rect x="27" y="518" width="1" height="1" fill="#333333"/><rect x="28" y="518" width="1" height="1" fill="#333333"/><rect x="13" y="520" width="1" height="1" fill="#333333"/><rect x="14" y="520" width="1" height="1" fill="#333333"/><rect x="9" y="522" width="1" height="1" fill="#333333"/><rect x="9" y="526" width="5" height="1" fill="#001080"/><rect x="15" y="526" width="1" height="1" fill="#333333"/><rect x="17" y="526" width="7" height="1" fill="#267f99"/><rect x="24" y="526" width="1" height="1" fill="#333333"/><rect x="25" y="526" width="1" height="1" fill="#333333"/><rect x="26" y="526" width="5" height="1" fill="#795e26"/><rect x="31" y="526" width="1" height="1" fill="#333333"/><rect x="32" y="526" width="4" height="1" fill="#a31515"/><rect x="36" y="526" width="1" height="1" fill="#333333"/><rect x="38" y="526" width="3" height="1" fill="#001080"/><rect x="41" y="526" width="1" height="1" fill="#333333"/><rect x="42" y="526" width="1" height="1" fill="#333333"/><rect x="43" y="526" width="1" height="1" fill="#333333"/><rect x="44" y="526" width="5" height="1" fill="#795e26"/><rect x="49" y="526" width="1" height="1" fill="#333333"/><rect x="50" y="526" width="1" height="1" fill="#333333"/><rect x="51" y="526" width="1" height="1" fill="#333333"/><rect x="9" y="530" width="2" height="1" fill="#af00db"/><rect x="12" y="530" width="1" height="1" fill="#333333"/><rect x="13" y="530" width="5" height="1" fill="#795e26"/><rect x="18" y="530" width="1" height="1" fill="#333333"/><rect x="19" y="530" width="5" height="1" fill="#001080"/><rect x="24" y="530" width="1" height="1" fill="#333333"/><rect x="25" y="530" width="1" height="1" fill="#333333"/><rect x="27" y="530" width="1" height="1" fill="#333333"/><rect x="13" y="532" width="6" height="1" fill="#af00db"/><rect x="20" y="532" width="1" height="1" fill="#333333"/><rect x="17" y="534" width="6" height="1" fill="#a31515"/><rect x="24" y="534" width="1" height="1" fill="#333333"/><rect x="25" y="534" width="1" height="1" fill="#333333"/><rect x="27" y="534" width="1" height="1" fill="#098658"/><rect x="28" y="534" width="1" height="1" fill="#333333"/><rect x="17" y="536" width="8" height="1" fill="#a31515"/><rect x="26" y="536" width="1" height="1" fill="#333333"/><rect x="27" y="536" width="1" height="1" fill="#333333"/><rect x="29" y="536" width="7" height="1" fill="#a31515"/><rect x="36" y="536" width="1" height="1" fill="#333333"/><rect x="17" y="538" width="10" height="1" fill="#a31515"/><rect x="28" y="538" width="1" height="1" fill="#333333"/><rect x="29" y="538" width="1" height="1" fill="#333333"/><rect x="31" y="538" width="1" height="1" fill="#333333"/><rect x="21" y="540" width="1" height="1" fill="#333333"/><rect x="25" y="542" width="6" height="1" fill="#a31515"/><rect x="32" y="542" width="1" height="1" fill="#333333"/><rect x="33" y="542" width="1" height="1" fill="#333333"/><rect x="35" y="542" width="2" height="1" fill="#a31515"/><rect x="37" y="542" width="1" height="1" fill="#333333"/><rect x="25" y="544" width="9" height="1" fill="#a31515"/><rect x="35" y="544" width="1" height="1" fill="#333333"/><rect x="36" y="544" width="1" height="1" fill="#333333"/><rect x="38" y="544" width="3" height="1" fill="#a31515"/><rect x="42" y="544" width="5" height="1" fill="#a31515"/><rect x="48" y="544" width="2" height="1" fill="#a31515"/><rect x="51" y="544" width="5" height="1" fill="#a31515"/><rect x="56" y="544" width="1" height="1" fill="#333333"/><rect x="21" y="546" width="1" height="1" fill="#333333"/><rect x="17" y="548" width="1" height="1" fill="#333333"/><rect x="18" y="548" width="1" height="1" fill="#333333"/><rect x="17" y="550" width="6" height="1" fill="#a31515"/><rect x="24" y="550" width="1" height="1" fill="#333333"/><rect x="25" y="550" width="1" height="1" fill="#333333"/><rect x="27" y="550" width="1" height="1" fill="#333333"/><rect x="28" y="550" width="1" height="1" fill="#333333"/><rect x="13" y="552" width="1" height="1" fill="#333333"/><rect x="14" y="552" width="1" height="1" fill="#333333"/><rect x="9" y="554" width="1" height="1" fill="#333333"/><rect x="9" y="558" width="6" height="1" fill="#af00db"/><rect x="16" y="558" width="1" height="1" fill="#333333"/><rect x="13" y="560" width="6" height="1" fill="#a31515"/><rect x="20" y="560" width="1" height="1" fill="#333333"/><rect x="21" y="560" width="1" height="1" fill="#333333"/><rect x="23" y="560" width="1" height="1" fill="#098658"/><rect x="24" y="560" width="1" height="1" fill="#333333"/><rect x="13" y="562" width="8" height="1" fill="#a31515"/><rect x="22" y="562" width="1" height="1" fill="#333333"/><rect x="23" y="562" width="1" height="1" fill="#333333"/><rect x="25" y="562" width="9" height="1" fill="#a31515"/><rect x="34" y="562" width="1" height="1" fill="#333333"/><rect x="13" y="564" width="10" height="1" fill="#a31515"/><rect x="24" y="564" width="1" height="1" fill="#333333"/><rect x="25" y="564" width="1" height="1" fill="#333333"/><rect x="27" y="564" width="1" height="1" fill="#333333"/><rect x="28" y="564" width="1" height="1" fill="#333333"/><rect x="29" y="564" width="1" height="1" fill="#333333"/><rect x="13" y="566" width="6" height="1" fill="#a31515"/><rect x="20" y="566" width="1" height="1" fill="#333333"/><rect x="21" y="566" width="1" height="1" fill="#333333"/><rect x="23" y="566" width="5" height="1" fill="#001080"/><rect x="9" y="568" width="1" height="1" fill="#333333"/><rect x="10" y="568" width="1" height="1" fill="#333333"/><rect x="5" y="570" width="1" height="1" fill="#333333"/><rect x="1" y="572" width="1" height="1" fill="#333333"/></g></svg>
</body></html>
